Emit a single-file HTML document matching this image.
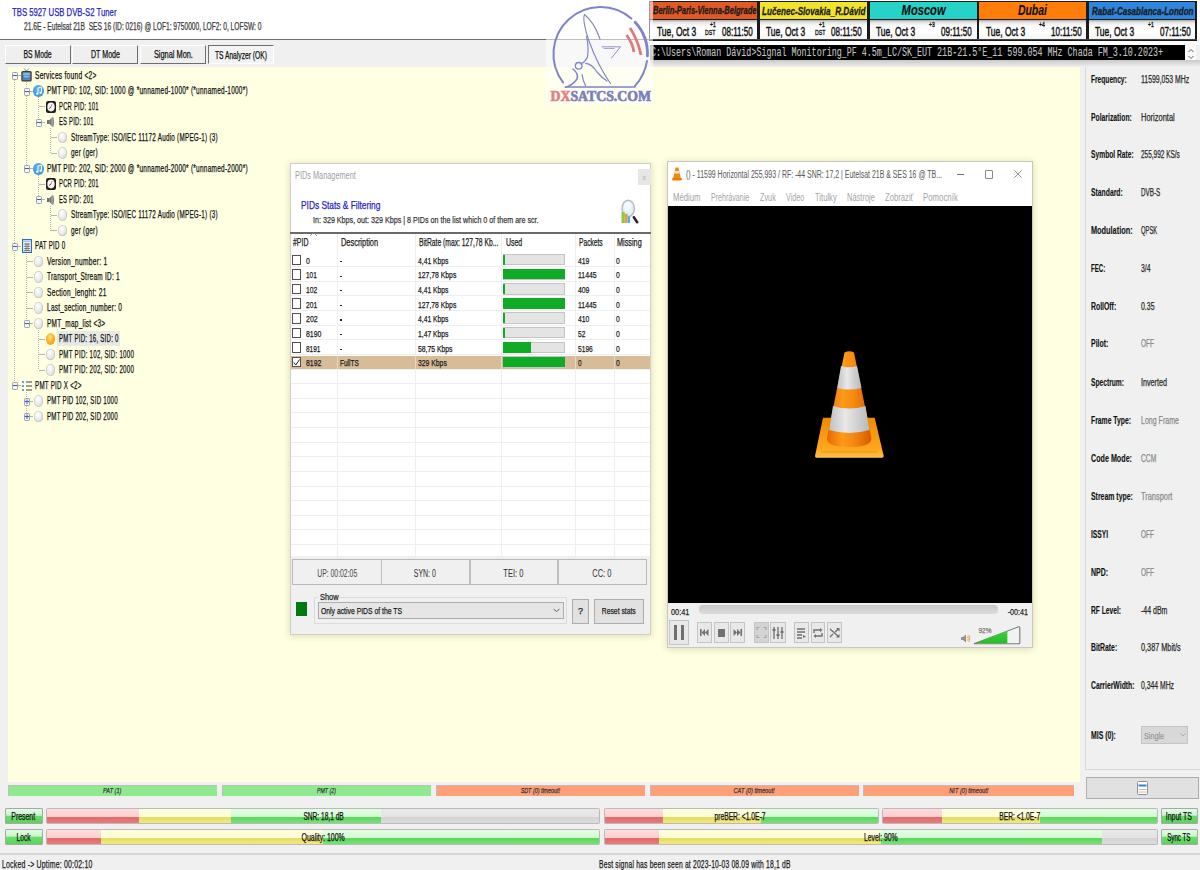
<!DOCTYPE html>
<html><head><meta charset="utf-8"><style>
html,body{margin:0;padding:0;}
body{width:1200px;height:870px;position:relative;overflow:hidden;background:#f0f0f0;font-family:'Liberation Sans', sans-serif;}
</style></head><body>
<div style="position:absolute;left:0px;top:0px;width:1200px;height:39px;background:#fff"></div>
<div style="position:absolute;left:0px;top:38.5px;width:650px;height:1.2px;background:#6e6e6e"></div>
<div style="position:absolute;left:12.25px;top:6.89px;white-space:pre;font:400 10.5px/10.5px 'Liberation Sans', sans-serif;color:#2525c8;-webkit-text-stroke:0.25px #2525c8;transform:scaleX(0.7368);transform-origin:0 0;">TBS 5927 USB DVB-S2 Tuner</div>
<div style="position:absolute;left:24.00px;top:21.53px;white-space:pre;font:400 10px/10px 'Liberation Sans', sans-serif;color:#3c3c3c;-webkit-text-stroke:0.25px #3c3c3c;transform:scaleX(0.6646);transform-origin:0 0;">21.6E - Eutelsat 21B  SES 16 (ID: 0216) @ LOF1: 9750000, LOF2: 0, LOFSW: 0</div>
<div style="position:absolute;left:0px;top:40px;width:1200px;height:27px;background:#f0f0f0"></div>
<div style="position:absolute;left:4.5px;top:45px;width:66px;height:19px;background:#efefef;border-top:1px solid #fff;border-left:1px solid #fff;border-right:1.7px solid #6e6e6e;border-bottom:1.7px solid #6e6e6e;box-sizing:border-box"></div>
<div style="position:absolute;left:72px;top:45px;width:66px;height:19px;background:#efefef;border-top:1px solid #fff;border-left:1px solid #fff;border-right:1.7px solid #6e6e6e;border-bottom:1.7px solid #6e6e6e;box-sizing:border-box"></div>
<div style="position:absolute;left:140px;top:45px;width:66px;height:19px;background:#efefef;border-top:1px solid #fff;border-left:1px solid #fff;border-right:1.7px solid #6e6e6e;border-bottom:1.7px solid #6e6e6e;box-sizing:border-box"></div>
<div style="position:absolute;left:208px;top:45px;width:66px;height:19px;background:#f3f3f3;border-top:1.6px solid #707070;border-left:1.6px solid #707070;border-right:1px solid #fff;border-bottom:1px solid #fff;box-sizing:border-box"></div>
<div style="position:absolute;left:37.50px;width:0;display:flex;justify-content:center;top:49.73px;height:10px;"><span style="white-space:pre;font:400 10px/10px 'Liberation Sans', sans-serif;color:#101010;-webkit-text-stroke:0.25px #101010;transform:scaleX(0.6806);transform-origin:50% 0;display:inline-block;">BS Mode</span></div>
<div style="position:absolute;left:105.00px;width:0;display:flex;justify-content:center;top:49.73px;height:10px;"><span style="white-space:pre;font:400 10px/10px 'Liberation Sans', sans-serif;color:#101010;-webkit-text-stroke:0.25px #101010;transform:scaleX(0.7081);transform-origin:50% 0;display:inline-block;">DT Mode</span></div>
<div style="position:absolute;left:173.00px;width:0;display:flex;justify-content:center;top:49.73px;height:10px;"><span style="white-space:pre;font:400 10px/10px 'Liberation Sans', sans-serif;color:#101010;-webkit-text-stroke:0.25px #101010;transform:scaleX(0.7385);transform-origin:50% 0;display:inline-block;">Signal Mon.</span></div>
<div style="position:absolute;left:241.00px;width:0;display:flex;justify-content:center;top:51.13px;height:10px;"><span style="white-space:pre;font:400 10px/10px 'Liberation Sans', sans-serif;color:#101010;-webkit-text-stroke:0.25px #101010;transform:scaleX(0.6683);transform-origin:50% 0;display:inline-block;">TS Analyzer (OK)</span></div>
<div style="position:absolute;left:7.5px;top:67px;width:1072px;height:715px;background:#ffffe1"></div>
<div style="position:absolute;left:26.0px;top:81.5px;width:1px;height:87.0px;background:repeating-linear-gradient(to bottom,#b4b4b4 0 1px,transparent 1px 2px)"></div>
<div style="position:absolute;left:14.7px;top:75.0px;width:6.800000000000001px;height:1px;background:#b8b8a8"></div>
<div style="position:absolute;left:38.0px;top:97.0px;width:1px;height:25.0px;background:repeating-linear-gradient(to bottom,#b4b4b4 0 1px,transparent 1px 2px)"></div>
<div style="position:absolute;left:26.7px;top:90.5px;width:6.800000000000001px;height:1px;background:#b8b8a8"></div>
<div style="position:absolute;left:38.7px;top:106.0px;width:6.799999999999997px;height:1px;background:#b8b8a8"></div>
<div style="position:absolute;left:50.0px;top:128.0px;width:1px;height:25.0px;background:repeating-linear-gradient(to bottom,#b4b4b4 0 1px,transparent 1px 2px)"></div>
<div style="position:absolute;left:38.7px;top:121.5px;width:6.799999999999997px;height:1px;background:#b8b8a8"></div>
<div style="position:absolute;left:50.7px;top:137.0px;width:6.799999999999997px;height:1px;background:#b8b8a8"></div>
<div style="position:absolute;left:50.7px;top:152.5px;width:6.799999999999997px;height:1px;background:#b8b8a8"></div>
<div style="position:absolute;left:38.0px;top:174.5px;width:1px;height:25.0px;background:repeating-linear-gradient(to bottom,#b4b4b4 0 1px,transparent 1px 2px)"></div>
<div style="position:absolute;left:26.7px;top:168.0px;width:6.800000000000001px;height:1px;background:#b8b8a8"></div>
<div style="position:absolute;left:38.7px;top:183.5px;width:6.799999999999997px;height:1px;background:#b8b8a8"></div>
<div style="position:absolute;left:50.0px;top:205.5px;width:1px;height:25.0px;background:repeating-linear-gradient(to bottom,#b4b4b4 0 1px,transparent 1px 2px)"></div>
<div style="position:absolute;left:38.7px;top:199.0px;width:6.799999999999997px;height:1px;background:#b8b8a8"></div>
<div style="position:absolute;left:50.7px;top:214.5px;width:6.799999999999997px;height:1px;background:#b8b8a8"></div>
<div style="position:absolute;left:50.7px;top:230.0px;width:6.799999999999997px;height:1px;background:#b8b8a8"></div>
<div style="position:absolute;left:26.0px;top:252.0px;width:1px;height:71.5px;background:repeating-linear-gradient(to bottom,#b4b4b4 0 1px,transparent 1px 2px)"></div>
<div style="position:absolute;left:14.7px;top:245.5px;width:6.800000000000001px;height:1px;background:#b8b8a8"></div>
<div style="position:absolute;left:26.7px;top:261.0px;width:6.800000000000001px;height:1px;background:#b8b8a8"></div>
<div style="position:absolute;left:26.7px;top:276.5px;width:6.800000000000001px;height:1px;background:#b8b8a8"></div>
<div style="position:absolute;left:26.7px;top:292.0px;width:6.800000000000001px;height:1px;background:#b8b8a8"></div>
<div style="position:absolute;left:26.7px;top:307.5px;width:6.800000000000001px;height:1px;background:#b8b8a8"></div>
<div style="position:absolute;left:38.0px;top:329.5px;width:1px;height:40.5px;background:repeating-linear-gradient(to bottom,#b4b4b4 0 1px,transparent 1px 2px)"></div>
<div style="position:absolute;left:26.7px;top:323.0px;width:6.800000000000001px;height:1px;background:#b8b8a8"></div>
<div style="position:absolute;left:38.7px;top:338.5px;width:6.799999999999997px;height:1px;background:#b8b8a8"></div>
<div style="position:absolute;left:38.7px;top:354.0px;width:6.799999999999997px;height:1px;background:#b8b8a8"></div>
<div style="position:absolute;left:38.7px;top:369.5px;width:6.799999999999997px;height:1px;background:#b8b8a8"></div>
<div style="position:absolute;left:26.0px;top:391.5px;width:1px;height:25.0px;background:repeating-linear-gradient(to bottom,#b4b4b4 0 1px,transparent 1px 2px)"></div>
<div style="position:absolute;left:14.7px;top:385.0px;width:6.800000000000001px;height:1px;background:#b8b8a8"></div>
<div style="position:absolute;left:26.7px;top:400.5px;width:6.800000000000001px;height:1px;background:#b8b8a8"></div>
<div style="position:absolute;left:26.7px;top:416.0px;width:6.800000000000001px;height:1px;background:#b8b8a8"></div>
<div style="position:absolute;left:14.2px;top:79.5px;width:1px;height:306.0px;background:repeating-linear-gradient(to bottom,#b4b4b4 0 1px,transparent 1px 2px)"></div>
<svg style="position:absolute;left:12px;top:72px" width="6" height="8" viewBox="0 0 6 8"><rect x="0.5" y="0.5" width="5" height="7" rx="0.8" fill="#f4f4f4" stroke="#a0a0a0" stroke-width="1"/><path d="M1 3.5 H5" stroke="#3a5cc8" stroke-width="1"/></svg>
<svg style="position:absolute;left:21.0px;top:68.0px" width="11" height="14" viewBox="0 0 11 14"><path d="M3 0.5 L5.5 3 L8 0.5" stroke="#606060" stroke-width="0.8" fill="none"/><rect x="0.3" y="3" width="10.4" height="10.5" rx="1.5" fill="#3c3c3c"/><rect x="1.5" y="4.2" width="8" height="8" rx="0.8" fill="#7a8088"/><rect x="2.2" y="4.8" width="6.6" height="6.6" rx="0.5" fill="#3a8ad8"/><rect x="2.2" y="4.8" width="6.6" height="2.6" fill="#7ab8f0"/><rect x="3" y="8.3" width="5" height="1" fill="#a8d0f8"/></svg>
<div style="position:absolute;left:34.60px;top:70.64px;white-space:pre;font:400 10px/10px 'Liberation Sans', sans-serif;color:#101010;-webkit-text-stroke:0.25px #101010;transform:scaleX(0.6602);transform-origin:0 0;letter-spacing:0.4px">Services found &lt;2&gt;</div>
<svg style="position:absolute;left:24px;top:88px" width="6" height="8" viewBox="0 0 6 8"><rect x="0.5" y="0.5" width="5" height="7" rx="0.8" fill="#f4f4f4" stroke="#a0a0a0" stroke-width="1"/><path d="M1 3.5 H5" stroke="#3a5cc8" stroke-width="1"/></svg>
<div style="position:absolute;left:33.3px;top:85.0px;width:10.5px;height:12px;border-radius:50%;background:radial-gradient(ellipse at 50% 40%,#70c0f8 0%,#3a98e0 70%,#2a80d0 100%)"></div>
<svg style="position:absolute;left:33.5px;top:85.0px" width="10" height="12" viewBox="0 0 10 12"><path d="M4 8.5 V3 L7.5 2 V7.5" stroke="#fff" stroke-width="0.9" fill="none"/><ellipse cx="3.2" cy="8.7" rx="1.2" ry="1" fill="#fff"/><ellipse cx="6.7" cy="7.8" rx="1.2" ry="1" fill="#fff"/></svg>
<div style="position:absolute;left:46.60px;top:86.14px;white-space:pre;font:400 10px/10px 'Liberation Sans', sans-serif;color:#101010;-webkit-text-stroke:0.25px #101010;transform:scaleX(0.6466);transform-origin:0 0;letter-spacing:0.4px">PMT PID: 102, SID: 1000 @ *unnamed-1000* (*unnamed-1000*)</div>
<svg style="position:absolute;left:45.5px;top:100.5px" width="10" height="12" viewBox="0 0 10 12"><rect x="0" y="0" width="10" height="12" rx="2.2" fill="#1e1e1e"/><ellipse cx="5" cy="6" rx="3.7" ry="4.4" fill="#f6f6f6"/><path d="M5 6 L3 7.6" stroke="#303030" stroke-width="0.8"/><path d="M5 6 L6 3" stroke="#d03030" stroke-width="0.6"/></svg>
<div style="position:absolute;left:58.60px;top:101.64px;white-space:pre;font:400 10px/10px 'Liberation Sans', sans-serif;color:#101010;-webkit-text-stroke:0.25px #101010;transform:scaleX(0.5865);transform-origin:0 0;letter-spacing:0.4px">PCR PID: 101</div>
<svg style="position:absolute;left:36px;top:119px" width="6" height="8" viewBox="0 0 6 8"><rect x="0.5" y="0.5" width="5" height="7" rx="0.8" fill="#f4f4f4" stroke="#a0a0a0" stroke-width="1"/><path d="M1 3.5 H5" stroke="#3a5cc8" stroke-width="1"/></svg>
<svg style="position:absolute;left:45.5px;top:115.0px" width="10" height="14" viewBox="0 0 10 14"><defs><linearGradient id="sg" x1="0" x2="1"><stop offset="0" stop-color="#5a5a5a"/><stop offset="0.6" stop-color="#a8a8a8"/><stop offset="1" stop-color="#6a6a6a"/></linearGradient></defs><rect x="1" y="5" width="2.5" height="4" fill="#707070"/><path d="M3.5 5 L7 1.5 Q9 7 7 12.5 L3.5 9 Z" fill="url(#sg)"/></svg>
<div style="position:absolute;left:58.60px;top:117.14px;white-space:pre;font:400 10px/10px 'Liberation Sans', sans-serif;color:#101010;-webkit-text-stroke:0.25px #101010;transform:scaleX(0.5830);transform-origin:0 0;letter-spacing:0.4px">ES PID: 101</div>
<div style="position:absolute;left:58.0px;top:131.5px;width:9px;height:11.5px;border-radius:50%;background:radial-gradient(ellipse at 40% 30%,#ffffff 0%,#ececec 45%,#cfcfcf 85%,#b8b8b8 100%);box-shadow:inset 0 0 0 0.5px #c0c0c0"></div>
<div style="position:absolute;left:70.60px;top:132.63px;white-space:pre;font:400 10px/10px 'Liberation Sans', sans-serif;color:#101010;-webkit-text-stroke:0.25px #101010;transform:scaleX(0.6293);transform-origin:0 0;letter-spacing:0.4px">StreamType: ISO/IEC 11172 Audio (MPEG-1) (3)</div>
<div style="position:absolute;left:58.0px;top:147.0px;width:9px;height:11.5px;border-radius:50%;background:radial-gradient(ellipse at 40% 30%,#ffffff 0%,#ececec 45%,#cfcfcf 85%,#b8b8b8 100%);box-shadow:inset 0 0 0 0.5px #c0c0c0"></div>
<div style="position:absolute;left:70.60px;top:148.13px;white-space:pre;font:400 10px/10px 'Liberation Sans', sans-serif;color:#101010;-webkit-text-stroke:0.25px #101010;transform:scaleX(0.6412);transform-origin:0 0;letter-spacing:0.4px">ger (ger)</div>
<svg style="position:absolute;left:24px;top:165px" width="6" height="8" viewBox="0 0 6 8"><rect x="0.5" y="0.5" width="5" height="7" rx="0.8" fill="#f4f4f4" stroke="#a0a0a0" stroke-width="1"/><path d="M1 3.5 H5" stroke="#3a5cc8" stroke-width="1"/></svg>
<div style="position:absolute;left:33.3px;top:162.5px;width:10.5px;height:12px;border-radius:50%;background:radial-gradient(ellipse at 50% 40%,#70c0f8 0%,#3a98e0 70%,#2a80d0 100%)"></div>
<svg style="position:absolute;left:33.5px;top:162.5px" width="10" height="12" viewBox="0 0 10 12"><path d="M4 8.5 V3 L7.5 2 V7.5" stroke="#fff" stroke-width="0.9" fill="none"/><ellipse cx="3.2" cy="8.7" rx="1.2" ry="1" fill="#fff"/><ellipse cx="6.7" cy="7.8" rx="1.2" ry="1" fill="#fff"/></svg>
<div style="position:absolute;left:46.60px;top:163.63px;white-space:pre;font:400 10px/10px 'Liberation Sans', sans-serif;color:#101010;-webkit-text-stroke:0.25px #101010;transform:scaleX(0.6466);transform-origin:0 0;letter-spacing:0.4px">PMT PID: 202, SID: 2000 @ *unnamed-2000* (*unnamed-2000*)</div>
<svg style="position:absolute;left:45.5px;top:178.0px" width="10" height="12" viewBox="0 0 10 12"><rect x="0" y="0" width="10" height="12" rx="2.2" fill="#1e1e1e"/><ellipse cx="5" cy="6" rx="3.7" ry="4.4" fill="#f6f6f6"/><path d="M5 6 L3 7.6" stroke="#303030" stroke-width="0.8"/><path d="M5 6 L6 3" stroke="#d03030" stroke-width="0.6"/></svg>
<div style="position:absolute;left:58.60px;top:179.13px;white-space:pre;font:400 10px/10px 'Liberation Sans', sans-serif;color:#101010;-webkit-text-stroke:0.25px #101010;transform:scaleX(0.5865);transform-origin:0 0;letter-spacing:0.4px">PCR PID: 201</div>
<svg style="position:absolute;left:36px;top:196px" width="6" height="8" viewBox="0 0 6 8"><rect x="0.5" y="0.5" width="5" height="7" rx="0.8" fill="#f4f4f4" stroke="#a0a0a0" stroke-width="1"/><path d="M1 3.5 H5" stroke="#3a5cc8" stroke-width="1"/></svg>
<svg style="position:absolute;left:45.5px;top:192.5px" width="10" height="14" viewBox="0 0 10 14"><defs><linearGradient id="sg" x1="0" x2="1"><stop offset="0" stop-color="#5a5a5a"/><stop offset="0.6" stop-color="#a8a8a8"/><stop offset="1" stop-color="#6a6a6a"/></linearGradient></defs><rect x="1" y="5" width="2.5" height="4" fill="#707070"/><path d="M3.5 5 L7 1.5 Q9 7 7 12.5 L3.5 9 Z" fill="url(#sg)"/></svg>
<div style="position:absolute;left:58.60px;top:194.63px;white-space:pre;font:400 10px/10px 'Liberation Sans', sans-serif;color:#101010;-webkit-text-stroke:0.25px #101010;transform:scaleX(0.5830);transform-origin:0 0;letter-spacing:0.4px">ES PID: 201</div>
<div style="position:absolute;left:58.0px;top:209.0px;width:9px;height:11.5px;border-radius:50%;background:radial-gradient(ellipse at 40% 30%,#ffffff 0%,#ececec 45%,#cfcfcf 85%,#b8b8b8 100%);box-shadow:inset 0 0 0 0.5px #c0c0c0"></div>
<div style="position:absolute;left:70.60px;top:210.13px;white-space:pre;font:400 10px/10px 'Liberation Sans', sans-serif;color:#101010;-webkit-text-stroke:0.25px #101010;transform:scaleX(0.6293);transform-origin:0 0;letter-spacing:0.4px">StreamType: ISO/IEC 11172 Audio (MPEG-1) (3)</div>
<div style="position:absolute;left:58.0px;top:224.5px;width:9px;height:11.5px;border-radius:50%;background:radial-gradient(ellipse at 40% 30%,#ffffff 0%,#ececec 45%,#cfcfcf 85%,#b8b8b8 100%);box-shadow:inset 0 0 0 0.5px #c0c0c0"></div>
<div style="position:absolute;left:70.60px;top:225.63px;white-space:pre;font:400 10px/10px 'Liberation Sans', sans-serif;color:#101010;-webkit-text-stroke:0.25px #101010;transform:scaleX(0.6412);transform-origin:0 0;letter-spacing:0.4px">ger (ger)</div>
<svg style="position:absolute;left:12px;top:243px" width="6" height="8" viewBox="0 0 6 8"><rect x="0.5" y="0.5" width="5" height="7" rx="0.8" fill="#f4f4f4" stroke="#a0a0a0" stroke-width="1"/><path d="M1 3.5 H5" stroke="#3a5cc8" stroke-width="1"/></svg>
<svg style="position:absolute;left:21.5px;top:239.0px" width="10" height="14" viewBox="0 0 10 14"><rect x="0.6" y="0.6" width="8.8" height="12.8" fill="#fff" stroke="#2a70c0" stroke-width="1.2"/><rect x="1.5" y="1.5" width="7" height="1.8" fill="#a8c8f0"/><path d="M2 5 H8 M2 7.3 H8 M2 9.6 H8 M2 11.6 H8 M4 4 V12 M6 4 V12" stroke="#606060" stroke-width="0.8"/></svg>
<div style="position:absolute;left:34.60px;top:241.13px;white-space:pre;font:400 10px/10px 'Liberation Sans', sans-serif;color:#101010;-webkit-text-stroke:0.25px #101010;transform:scaleX(0.6182);transform-origin:0 0;letter-spacing:0.4px">PAT PID 0</div>
<div style="position:absolute;left:34.0px;top:255.5px;width:9px;height:11.5px;border-radius:50%;background:radial-gradient(ellipse at 40% 30%,#ffffff 0%,#ececec 45%,#cfcfcf 85%,#b8b8b8 100%);box-shadow:inset 0 0 0 0.5px #c0c0c0"></div>
<div style="position:absolute;left:46.60px;top:256.63px;white-space:pre;font:400 10px/10px 'Liberation Sans', sans-serif;color:#101010;-webkit-text-stroke:0.25px #101010;transform:scaleX(0.6656);transform-origin:0 0;letter-spacing:0.4px">Version_number: 1</div>
<div style="position:absolute;left:34.0px;top:271.0px;width:9px;height:11.5px;border-radius:50%;background:radial-gradient(ellipse at 40% 30%,#ffffff 0%,#ececec 45%,#cfcfcf 85%,#b8b8b8 100%);box-shadow:inset 0 0 0 0.5px #c0c0c0"></div>
<div style="position:absolute;left:46.60px;top:272.13px;white-space:pre;font:400 10px/10px 'Liberation Sans', sans-serif;color:#101010;-webkit-text-stroke:0.25px #101010;transform:scaleX(0.6456);transform-origin:0 0;letter-spacing:0.4px">Transport_Stream ID: 1</div>
<div style="position:absolute;left:34.0px;top:286.5px;width:9px;height:11.5px;border-radius:50%;background:radial-gradient(ellipse at 40% 30%,#ffffff 0%,#ececec 45%,#cfcfcf 85%,#b8b8b8 100%);box-shadow:inset 0 0 0 0.5px #c0c0c0"></div>
<div style="position:absolute;left:46.60px;top:287.63px;white-space:pre;font:400 10px/10px 'Liberation Sans', sans-serif;color:#101010;-webkit-text-stroke:0.25px #101010;transform:scaleX(0.6624);transform-origin:0 0;letter-spacing:0.4px">Section_lenght: 21</div>
<div style="position:absolute;left:34.0px;top:302.0px;width:9px;height:11.5px;border-radius:50%;background:radial-gradient(ellipse at 40% 30%,#ffffff 0%,#ececec 45%,#cfcfcf 85%,#b8b8b8 100%);box-shadow:inset 0 0 0 0.5px #c0c0c0"></div>
<div style="position:absolute;left:46.60px;top:303.13px;white-space:pre;font:400 10px/10px 'Liberation Sans', sans-serif;color:#101010;-webkit-text-stroke:0.25px #101010;transform:scaleX(0.6504);transform-origin:0 0;letter-spacing:0.4px">Last_section_number: 0</div>
<svg style="position:absolute;left:24px;top:320px" width="6" height="8" viewBox="0 0 6 8"><rect x="0.5" y="0.5" width="5" height="7" rx="0.8" fill="#f4f4f4" stroke="#a0a0a0" stroke-width="1"/><path d="M1 3.5 H5" stroke="#3a5cc8" stroke-width="1"/></svg>
<div style="position:absolute;left:34.0px;top:317.5px;width:9px;height:11.5px;border-radius:50%;background:radial-gradient(ellipse at 40% 30%,#ffffff 0%,#ececec 45%,#cfcfcf 85%,#b8b8b8 100%);box-shadow:inset 0 0 0 0.5px #c0c0c0"></div>
<div style="position:absolute;left:46.60px;top:318.63px;white-space:pre;font:400 10px/10px 'Liberation Sans', sans-serif;color:#101010;-webkit-text-stroke:0.25px #101010;transform:scaleX(0.6465);transform-origin:0 0;letter-spacing:0.4px">PMT_map_list &lt;3&gt;</div>
<div style="position:absolute;left:57px;top:331px;width:62.5px;height:15px;background:#e8e8e8"></div>
<div style="position:absolute;left:46.0px;top:333.0px;width:9px;height:11.5px;border-radius:50%;background:radial-gradient(ellipse at 45% 35%,#ffe080 0%,#f8a818 60%,#e88a00 100%)"></div>
<div style="position:absolute;left:58.60px;top:334.13px;white-space:pre;font:400 10px/10px 'Liberation Sans', sans-serif;color:#101010;-webkit-text-stroke:0.25px #101010;transform:scaleX(0.6086);transform-origin:0 0;letter-spacing:0.4px">PMT PID: 16, SID: 0</div>
<div style="position:absolute;left:46.0px;top:348.5px;width:9px;height:11.5px;border-radius:50%;background:radial-gradient(ellipse at 40% 30%,#ffffff 0%,#ececec 45%,#cfcfcf 85%,#b8b8b8 100%);box-shadow:inset 0 0 0 0.5px #c0c0c0"></div>
<div style="position:absolute;left:58.60px;top:349.63px;white-space:pre;font:400 10px/10px 'Liberation Sans', sans-serif;color:#101010;-webkit-text-stroke:0.25px #101010;transform:scaleX(0.6167);transform-origin:0 0;letter-spacing:0.4px">PMT PID: 102, SID: 1000</div>
<div style="position:absolute;left:46.0px;top:364.0px;width:9px;height:11.5px;border-radius:50%;background:radial-gradient(ellipse at 40% 30%,#ffffff 0%,#ececec 45%,#cfcfcf 85%,#b8b8b8 100%);box-shadow:inset 0 0 0 0.5px #c0c0c0"></div>
<div style="position:absolute;left:58.60px;top:365.13px;white-space:pre;font:400 10px/10px 'Liberation Sans', sans-serif;color:#101010;-webkit-text-stroke:0.25px #101010;transform:scaleX(0.6167);transform-origin:0 0;letter-spacing:0.4px">PMT PID: 202, SID: 2000</div>
<svg style="position:absolute;left:12px;top:382px" width="6" height="8" viewBox="0 0 6 8"><rect x="0.5" y="0.5" width="5" height="7" rx="0.8" fill="#f4f4f4" stroke="#a0a0a0" stroke-width="1"/><path d="M1 3.5 H5" stroke="#3a5cc8" stroke-width="1"/></svg>
<svg style="position:absolute;left:21.5px;top:379.5px" width="11" height="12" viewBox="0 0 11 12"><rect x="0" y="1" width="2" height="2" fill="#60a0e8"/><rect x="0" y="5" width="2" height="2" fill="#60a0e8"/><rect x="0" y="9" width="2" height="2" fill="#60a0e8"/><path d="M4 2 H10 M4 6 H10 M4 10 H10" stroke="#404040" stroke-width="1"/></svg>
<div style="position:absolute;left:34.60px;top:380.63px;white-space:pre;font:400 10px/10px 'Liberation Sans', sans-serif;color:#101010;-webkit-text-stroke:0.25px #101010;transform:scaleX(0.6216);transform-origin:0 0;letter-spacing:0.4px">PMT PID X &lt;2&gt;</div>
<svg style="position:absolute;left:24px;top:398px" width="6" height="8" viewBox="0 0 6 8"><rect x="0.5" y="0.5" width="5" height="7" rx="0.8" fill="#f4f4f4" stroke="#a0a0a0" stroke-width="1"/><path d="M1 3.5 H5" stroke="#3a5cc8" stroke-width="1"/><path d="M3 1.5 V6" stroke="#3a5cc8" stroke-width="1"/></svg>
<div style="position:absolute;left:34.0px;top:395.0px;width:9px;height:11.5px;border-radius:50%;background:radial-gradient(ellipse at 40% 30%,#ffffff 0%,#ececec 45%,#cfcfcf 85%,#b8b8b8 100%);box-shadow:inset 0 0 0 0.5px #c0c0c0"></div>
<div style="position:absolute;left:46.60px;top:396.13px;white-space:pre;font:400 10px/10px 'Liberation Sans', sans-serif;color:#101010;-webkit-text-stroke:0.25px #101010;transform:scaleX(0.6139);transform-origin:0 0;letter-spacing:0.4px">PMT PID 102, SID 1000</div>
<svg style="position:absolute;left:24px;top:413px" width="6" height="8" viewBox="0 0 6 8"><rect x="0.5" y="0.5" width="5" height="7" rx="0.8" fill="#f4f4f4" stroke="#a0a0a0" stroke-width="1"/><path d="M1 3.5 H5" stroke="#3a5cc8" stroke-width="1"/><path d="M3 1.5 V6" stroke="#3a5cc8" stroke-width="1"/></svg>
<div style="position:absolute;left:34.0px;top:410.5px;width:9px;height:11.5px;border-radius:50%;background:radial-gradient(ellipse at 40% 30%,#ffffff 0%,#ececec 45%,#cfcfcf 85%,#b8b8b8 100%);box-shadow:inset 0 0 0 0.5px #c0c0c0"></div>
<div style="position:absolute;left:46.60px;top:411.63px;white-space:pre;font:400 10px/10px 'Liberation Sans', sans-serif;color:#101010;-webkit-text-stroke:0.25px #101010;transform:scaleX(0.6139);transform-origin:0 0;letter-spacing:0.4px">PMT PID 202, SID 2000</div>
<div style="position:absolute;left:1085px;top:61px;width:115px;height:709px;background:#f0f0f0;border-left:1px solid #d8d8d8;border-bottom:1px solid #d8d8d8;box-sizing:border-box"></div>
<div style="position:absolute;left:1091.00px;top:74.64px;white-space:pre;font:700 10px/10px 'Liberation Sans', sans-serif;color:#101010;-webkit-text-stroke:0.12px #101010;transform:scaleX(0.6623);transform-origin:0 0;">Frequency:</div>
<div style="position:absolute;left:1141.00px;top:74.64px;white-space:pre;font:400 10px/10px 'Liberation Sans', sans-serif;color:#2a2a2a;-webkit-text-stroke:0.25px #2a2a2a;transform:scaleX(0.6900);transform-origin:0 0;">11599,053 MHz</div>
<div style="position:absolute;left:1091.00px;top:112.54px;white-space:pre;font:700 10px/10px 'Liberation Sans', sans-serif;color:#101010;-webkit-text-stroke:0.12px #101010;transform:scaleX(0.6798);transform-origin:0 0;">Polarization:</div>
<div style="position:absolute;left:1141.00px;top:112.54px;white-space:pre;font:400 10px/10px 'Liberation Sans', sans-serif;color:#2a2a2a;-webkit-text-stroke:0.25px #2a2a2a;transform:scaleX(0.7506);transform-origin:0 0;">Horizontal</div>
<div style="position:absolute;left:1091.00px;top:150.13px;white-space:pre;font:700 10px/10px 'Liberation Sans', sans-serif;color:#101010;-webkit-text-stroke:0.12px #101010;transform:scaleX(0.6689);transform-origin:0 0;">Symbol Rate:</div>
<div style="position:absolute;left:1141.00px;top:150.13px;white-space:pre;font:400 10px/10px 'Liberation Sans', sans-serif;color:#2a2a2a;-webkit-text-stroke:0.25px #2a2a2a;transform:scaleX(0.6462);transform-origin:0 0;">255,992 KS/s</div>
<div style="position:absolute;left:1091.00px;top:187.94px;white-space:pre;font:700 10px/10px 'Liberation Sans', sans-serif;color:#101010;-webkit-text-stroke:0.12px #101010;transform:scaleX(0.6814);transform-origin:0 0;">Standard:</div>
<div style="position:absolute;left:1141.00px;top:187.94px;white-space:pre;font:400 10px/10px 'Liberation Sans', sans-serif;color:#2a2a2a;-webkit-text-stroke:0.25px #2a2a2a;transform:scaleX(0.6315);transform-origin:0 0;">DVB-S</div>
<div style="position:absolute;left:1091.00px;top:225.83px;white-space:pre;font:700 10px/10px 'Liberation Sans', sans-serif;color:#101010;-webkit-text-stroke:0.12px #101010;transform:scaleX(0.7343);transform-origin:0 0;">Modulation:</div>
<div style="position:absolute;left:1141.00px;top:225.83px;white-space:pre;font:400 10px/10px 'Liberation Sans', sans-serif;color:#2a2a2a;-webkit-text-stroke:0.25px #2a2a2a;transform:scaleX(0.5828);transform-origin:0 0;">QPSK</div>
<div style="position:absolute;left:1091.00px;top:263.74px;white-space:pre;font:700 10px/10px 'Liberation Sans', sans-serif;color:#101010;-webkit-text-stroke:0.12px #101010;transform:scaleX(0.6083);transform-origin:0 0;">FEC:</div>
<div style="position:absolute;left:1141.00px;top:263.74px;white-space:pre;font:400 10px/10px 'Liberation Sans', sans-serif;color:#2a2a2a;-webkit-text-stroke:0.25px #2a2a2a;transform:scaleX(0.6831);transform-origin:0 0;">3/4</div>
<div style="position:absolute;left:1091.00px;top:301.53px;white-space:pre;font:700 10px/10px 'Liberation Sans', sans-serif;color:#101010;-webkit-text-stroke:0.12px #101010;transform:scaleX(0.6875);transform-origin:0 0;">RollOff:</div>
<div style="position:absolute;left:1141.00px;top:301.53px;white-space:pre;font:400 10px/10px 'Liberation Sans', sans-serif;color:#2a2a2a;-webkit-text-stroke:0.25px #2a2a2a;transform:scaleX(0.6934);transform-origin:0 0;">0.35</div>
<div style="position:absolute;left:1091.00px;top:339.33px;white-space:pre;font:700 10px/10px 'Liberation Sans', sans-serif;color:#101010;-webkit-text-stroke:0.12px #101010;transform:scaleX(0.6960);transform-origin:0 0;">Pilot:</div>
<div style="position:absolute;left:1141.00px;top:339.33px;white-space:pre;font:400 10px/10px 'Liberation Sans', sans-serif;color:#8a8a8a;-webkit-text-stroke:0.25px #8a8a8a;transform:scaleX(0.6500);transform-origin:0 0;">OFF</div>
<div style="position:absolute;left:1091.00px;top:377.53px;white-space:pre;font:700 10px/10px 'Liberation Sans', sans-serif;color:#101010;-webkit-text-stroke:0.12px #101010;transform:scaleX(0.6673);transform-origin:0 0;">Spectrum:</div>
<div style="position:absolute;left:1141.00px;top:377.53px;white-space:pre;font:400 10px/10px 'Liberation Sans', sans-serif;color:#2a2a2a;-webkit-text-stroke:0.25px #2a2a2a;transform:scaleX(0.7194);transform-origin:0 0;">Inverted</div>
<div style="position:absolute;left:1091.00px;top:415.83px;white-space:pre;font:700 10px/10px 'Liberation Sans', sans-serif;color:#101010;-webkit-text-stroke:0.12px #101010;transform:scaleX(0.6810);transform-origin:0 0;">Frame Type:</div>
<div style="position:absolute;left:1141.00px;top:415.83px;white-space:pre;font:400 10px/10px 'Liberation Sans', sans-serif;color:#8a8a8a;-webkit-text-stroke:0.25px #8a8a8a;transform:scaleX(0.7029);transform-origin:0 0;">Long Frame</div>
<div style="position:absolute;left:1091.00px;top:454.03px;white-space:pre;font:700 10px/10px 'Liberation Sans', sans-serif;color:#101010;-webkit-text-stroke:0.12px #101010;transform:scaleX(0.7165);transform-origin:0 0;">Code Mode:</div>
<div style="position:absolute;left:1141.00px;top:454.03px;white-space:pre;font:400 10px/10px 'Liberation Sans', sans-serif;color:#8a8a8a;-webkit-text-stroke:0.25px #8a8a8a;transform:scaleX(0.6716);transform-origin:0 0;">CCM</div>
<div style="position:absolute;left:1091.00px;top:491.74px;white-space:pre;font:700 10px/10px 'Liberation Sans', sans-serif;color:#101010;-webkit-text-stroke:0.12px #101010;transform:scaleX(0.6917);transform-origin:0 0;">Stream type:</div>
<div style="position:absolute;left:1141.00px;top:491.74px;white-space:pre;font:400 10px/10px 'Liberation Sans', sans-serif;color:#8a8a8a;-webkit-text-stroke:0.25px #8a8a8a;transform:scaleX(0.7402);transform-origin:0 0;">Transport</div>
<div style="position:absolute;left:1091.00px;top:529.84px;white-space:pre;font:700 10px/10px 'Liberation Sans', sans-serif;color:#101010;-webkit-text-stroke:0.12px #101010;transform:scaleX(0.6646);transform-origin:0 0;">ISSYI</div>
<div style="position:absolute;left:1141.00px;top:529.84px;white-space:pre;font:400 10px/10px 'Liberation Sans', sans-serif;color:#8a8a8a;-webkit-text-stroke:0.25px #8a8a8a;transform:scaleX(0.6500);transform-origin:0 0;">OFF</div>
<div style="position:absolute;left:1091.00px;top:567.53px;white-space:pre;font:700 10px/10px 'Liberation Sans', sans-serif;color:#101010;-webkit-text-stroke:0.12px #101010;transform:scaleX(0.6952);transform-origin:0 0;">NPD:</div>
<div style="position:absolute;left:1141.00px;top:567.53px;white-space:pre;font:400 10px/10px 'Liberation Sans', sans-serif;color:#8a8a8a;-webkit-text-stroke:0.25px #8a8a8a;transform:scaleX(0.6500);transform-origin:0 0;">OFF</div>
<div style="position:absolute;left:1091.00px;top:605.74px;white-space:pre;font:700 10px/10px 'Liberation Sans', sans-serif;color:#101010;-webkit-text-stroke:0.12px #101010;transform:scaleX(0.6664);transform-origin:0 0;">RF Level:</div>
<div style="position:absolute;left:1141.00px;top:605.74px;white-space:pre;font:400 10px/10px 'Liberation Sans', sans-serif;color:#2a2a2a;-webkit-text-stroke:0.25px #2a2a2a;transform:scaleX(0.6985);transform-origin:0 0;">-44 dBm</div>
<div style="position:absolute;left:1091.00px;top:643.43px;white-space:pre;font:700 10px/10px 'Liberation Sans', sans-serif;color:#101010;-webkit-text-stroke:0.12px #101010;transform:scaleX(0.6833);transform-origin:0 0;">BitRate:</div>
<div style="position:absolute;left:1141.00px;top:643.43px;white-space:pre;font:400 10px/10px 'Liberation Sans', sans-serif;color:#2a2a2a;-webkit-text-stroke:0.25px #2a2a2a;transform:scaleX(0.7286);transform-origin:0 0;">0,387 Mbit/s</div>
<div style="position:absolute;left:1091.00px;top:681.34px;white-space:pre;font:700 10px/10px 'Liberation Sans', sans-serif;color:#101010;-webkit-text-stroke:0.12px #101010;transform:scaleX(0.6817);transform-origin:0 0;">CarrierWidth:</div>
<div style="position:absolute;left:1141.00px;top:681.34px;white-space:pre;font:400 10px/10px 'Liberation Sans', sans-serif;color:#2a2a2a;-webkit-text-stroke:0.25px #2a2a2a;transform:scaleX(0.6824);transform-origin:0 0;">0,344 MHz</div>
<div style="position:absolute;left:1091.00px;top:730.74px;white-space:pre;font:700 10px/10px 'Liberation Sans', sans-serif;color:#101010;-webkit-text-stroke:0.12px #101010;transform:scaleX(0.6896);transform-origin:0 0;">MIS (0):</div>
<div style="position:absolute;left:1141px;top:726px;width:47px;height:18px;background:#d8d8d8;border:1px solid #c4c4c4;box-sizing:border-box"></div>
<div style="position:absolute;left:1143.50px;top:730.88px;white-space:pre;font:400 9.5px/9.5px 'Liberation Sans', sans-serif;color:#9a9a9a;-webkit-text-stroke:0.25px #9a9a9a;transform:scaleX(0.7569);transform-origin:0 0;">Single</div>
<svg style="position:absolute;left:1180px;top:733px" width="6" height="4" viewBox="0 0 6 4"><path d="M0.5 0.5 L3 3 L5.5 0.5" stroke="#a0a0a0" stroke-width="0.8" fill="none"/></svg>
<div style="position:absolute;left:1086px;top:777px;width:113px;height:22px;background:#e1e1e1;border:1px solid #adadad;box-sizing:border-box"></div>
<svg style="position:absolute;left:1137px;top:781px" width="11" height="14" viewBox="0 0 11 14"><rect x="0.5" y="0.5" width="10" height="13" rx="1" fill="#fff" stroke="#909090"/><rect x="1.5" y="3.5" width="8" height="2" fill="#3a7ad8"/><path d="M1.5 8.5 H9.5 M1.5 11 H9.5" stroke="#b0b0b0" stroke-width="0.8"/></svg>
<div style="position:absolute;left:649px;top:1px;width:548px;height:40px;background:#1a1a1a"></div>
<div style="position:absolute;left:650.2px;top:2.2px;width:107.3px;height:16.5px;background:#e05a28"></div>
<div style="position:absolute;left:650.2px;top:19.8px;width:107.3px;height:19.2px;background:linear-gradient(#a8a8a8 0%,#e4e4e4 12%,#fafafa 30%,#ffffff 60%,#f4f4f4 100%)"></div>
<div style="position:absolute;left:759.7px;top:2.2px;width:107.59999999999995px;height:16.5px;background:#f2e42a"></div>
<div style="position:absolute;left:759.7px;top:19.8px;width:107.59999999999995px;height:19.2px;background:linear-gradient(#a8a8a8 0%,#e4e4e4 12%,#fafafa 30%,#ffffff 60%,#f4f4f4 100%)"></div>
<div style="position:absolute;left:869.5px;top:2.2px;width:107.50000000000004px;height:16.5px;background:#27d3c6"></div>
<div style="position:absolute;left:869.5px;top:19.8px;width:107.50000000000004px;height:19.2px;background:linear-gradient(#a8a8a8 0%,#e4e4e4 12%,#fafafa 30%,#ffffff 60%,#f4f4f4 100%)"></div>
<div style="position:absolute;left:979.2px;top:2.2px;width:107.20000000000009px;height:16.5px;background:#ff7d0a"></div>
<div style="position:absolute;left:979.2px;top:19.8px;width:107.20000000000009px;height:19.2px;background:linear-gradient(#a8a8a8 0%,#e4e4e4 12%,#fafafa 30%,#ffffff 60%,#f4f4f4 100%)"></div>
<div style="position:absolute;left:1088.6000000000001px;top:2.2px;width:106.8999999999999px;height:16.5px;background:#2f86de"></div>
<div style="position:absolute;left:1088.6000000000001px;top:19.8px;width:106.8999999999999px;height:19.2px;background:linear-gradient(#a8a8a8 0%,#e4e4e4 12%,#fafafa 30%,#ffffff 60%,#f4f4f4 100%)"></div>
<div style="position:absolute;left:652.80px;top:5.15px;white-space:pre;font:italic 700 11px/11px 'Liberation Sans', sans-serif;color:#1a1a1a;-webkit-text-stroke:0.3px #1a1a1a;transform:scaleX(0.6811);transform-origin:0 0;">Berlin-Paris-Vienna-Belgrade</div>
<div style="position:absolute;left:762.00px;top:5.61px;white-space:pre;font:italic 700 11.5px/11.5px 'Liberation Sans', sans-serif;color:#1a1a1a;-webkit-text-stroke:0.3px #1a1a1a;transform:scaleX(0.7064);transform-origin:0 0;">Lučenec-Slovakia_R.Dávid</div>
<div style="position:absolute;left:923.15px;width:0;display:flex;justify-content:center;top:3.39px;height:14px;"><span style="white-space:pre;font:italic 700 14px/14px 'Liberation Sans', sans-serif;color:#111;-webkit-text-stroke:0.12px #111;transform:scaleX(0.7966);transform-origin:50% 0;display:inline-block;">Moscow</span></div>
<div style="position:absolute;left:1032.70px;width:0;display:flex;justify-content:center;top:3.39px;height:14px;"><span style="white-space:pre;font:italic 700 14px/14px 'Liberation Sans', sans-serif;color:#111;-webkit-text-stroke:0.12px #111;transform:scaleX(0.7457);transform-origin:50% 0;display:inline-block;">Dubai</span></div>
<div style="position:absolute;left:1091.50px;top:5.65px;white-space:pre;font:italic 700 11px/11px 'Liberation Sans', sans-serif;color:#1a1a1a;-webkit-text-stroke:0.3px #1a1a1a;transform:scaleX(0.7283);transform-origin:0 0;">Rabat-Casablanca-London</div>
<div style="position:absolute;left:656.90px;top:24.53px;white-space:pre;font:400 13px/13px 'Liberation Sans', sans-serif;color:#111;-webkit-text-stroke:0.45px #111;transform:scaleX(0.6510);transform-origin:0 0;">Tue, Oct 3</div>
<div style="position:absolute;left:721.70px;top:24.53px;white-space:pre;font:400 13px/13px 'Liberation Sans', sans-serif;color:#111;-webkit-text-stroke:0.45px #111;transform:scaleX(0.6205);transform-origin:0 0;">08:11:50</div>
<div style="position:absolute;left:709.80px;top:20.91px;white-space:pre;font:400 8px/8px 'Liberation Sans', sans-serif;color:#111;-webkit-text-stroke:0.35px #111;transform:scaleX(0.6247);transform-origin:0 0;">+1</div>
<div style="position:absolute;left:705.00px;top:29.31px;white-space:pre;font:400 8px/8px 'Liberation Sans', sans-serif;color:#111;-webkit-text-stroke:0.35px #111;transform:scaleX(0.6500);transform-origin:0 0;">DST</div>
<div style="position:absolute;left:766.40px;top:24.53px;white-space:pre;font:400 13px/13px 'Liberation Sans', sans-serif;color:#111;-webkit-text-stroke:0.45px #111;transform:scaleX(0.6510);transform-origin:0 0;">Tue, Oct 3</div>
<div style="position:absolute;left:831.20px;top:24.53px;white-space:pre;font:400 13px/13px 'Liberation Sans', sans-serif;color:#111;-webkit-text-stroke:0.45px #111;transform:scaleX(0.6205);transform-origin:0 0;">08:11:50</div>
<div style="position:absolute;left:819.30px;top:20.91px;white-space:pre;font:400 8px/8px 'Liberation Sans', sans-serif;color:#111;-webkit-text-stroke:0.35px #111;transform:scaleX(0.6247);transform-origin:0 0;">+1</div>
<div style="position:absolute;left:814.50px;top:29.31px;white-space:pre;font:400 8px/8px 'Liberation Sans', sans-serif;color:#111;-webkit-text-stroke:0.35px #111;transform:scaleX(0.6500);transform-origin:0 0;">DST</div>
<div style="position:absolute;left:876.20px;top:24.53px;white-space:pre;font:400 13px/13px 'Liberation Sans', sans-serif;color:#111;-webkit-text-stroke:0.45px #111;transform:scaleX(0.6510);transform-origin:0 0;">Tue, Oct 3</div>
<div style="position:absolute;left:941.00px;top:24.53px;white-space:pre;font:400 13px/13px 'Liberation Sans', sans-serif;color:#111;-webkit-text-stroke:0.45px #111;transform:scaleX(0.6205);transform-origin:0 0;">09:11:50</div>
<div style="position:absolute;left:929.10px;top:20.91px;white-space:pre;font:400 8px/8px 'Liberation Sans', sans-serif;color:#111;-webkit-text-stroke:0.35px #111;transform:scaleX(0.6247);transform-origin:0 0;">+3</div>
<div style="position:absolute;left:985.90px;top:24.53px;white-space:pre;font:400 13px/13px 'Liberation Sans', sans-serif;color:#111;-webkit-text-stroke:0.45px #111;transform:scaleX(0.6510);transform-origin:0 0;">Tue, Oct 3</div>
<div style="position:absolute;left:1050.70px;top:24.53px;white-space:pre;font:400 13px/13px 'Liberation Sans', sans-serif;color:#111;-webkit-text-stroke:0.45px #111;transform:scaleX(0.6205);transform-origin:0 0;">10:11:50</div>
<div style="position:absolute;left:1038.80px;top:20.91px;white-space:pre;font:400 8px/8px 'Liberation Sans', sans-serif;color:#111;-webkit-text-stroke:0.35px #111;transform:scaleX(0.6247);transform-origin:0 0;">+4</div>
<div style="position:absolute;left:1095.30px;top:24.53px;white-space:pre;font:400 13px/13px 'Liberation Sans', sans-serif;color:#111;-webkit-text-stroke:0.45px #111;transform:scaleX(0.6510);transform-origin:0 0;">Tue, Oct 3</div>
<div style="position:absolute;left:1160.10px;top:24.53px;white-space:pre;font:400 13px/13px 'Liberation Sans', sans-serif;color:#111;-webkit-text-stroke:0.45px #111;transform:scaleX(0.6205);transform-origin:0 0;">07:11:50</div>
<div style="position:absolute;left:1148.20px;top:20.91px;white-space:pre;font:400 8px/8px 'Liberation Sans', sans-serif;color:#111;-webkit-text-stroke:0.35px #111;transform:scaleX(0.6247);transform-origin:0 0;">+1</div>
<div style="position:absolute;left:649px;top:38.8px;width:548px;height:1.6px;background:#454545"></div>
<div style="position:absolute;left:650px;top:40.5px;width:550px;height:4.5px;background:#fff"></div>
<div style="position:absolute;left:650px;top:45px;width:535px;height:15px;background:#000"></div>
<div style="position:absolute;left:650px;top:45px;width:4px;height:15px;background:#808080"></div>
<div style="position:absolute;left:650.50px;top:46.66px;white-space:pre;font:400 12px/12px 'Liberation Mono', monospace;color:#c4c4c4;-webkit-text-stroke:0.1px #c4c4c4;transform:scaleX(0.6970);transform-origin:0 0;">C:\Users\Roman Dávid&gt;Signal Monitoring_PF 4.5m_LC/SK_EUT 21B-21.5°E_11 599.054 MHz Chada FM_3.10.2023+</div>
<div style="position:absolute;left:1185px;top:44px;width:11px;height:17px;background:#fafafa"></div>
<svg style="position:absolute;left:1187px;top:47px" width="8" height="14" viewBox="0 0 8 14"><path d="M1.5 5 L4 2.5 L6.5 5 M1.5 9 L4 11.5 L6.5 9" stroke="#505050" stroke-width="0.9" fill="none"/></svg>
<div style="position:absolute;left:650px;top:60px;width:550px;height:7px;background:linear-gradient(#c8c8c8,#f0f0f0)"></div>
<div style="position:absolute;left:290px;top:162.5px;width:361px;height:472.0px;background:#fff;box-shadow:0 1px 7px rgba(70,70,20,0.2);border:1px solid #d0d0c8;box-sizing:border-box"></div>
<div style="position:absolute;left:295.20px;top:170.94px;white-space:pre;font:400 10px/10px 'Liberation Sans', sans-serif;color:#a0a0a0;-webkit-text-stroke:0px #a0a0a0;transform:scaleX(0.7341);transform-origin:0 0;">PIDs Management</div>
<div style="position:absolute;left:638px;top:169px;width:12.5px;height:16px;background:#e6e6e6"></div>
<div style="position:absolute;left:644.20px;width:0;display:flex;justify-content:center;top:173.59px;height:7px;"><span style="white-space:pre;font:400 7px/7px 'Liberation Sans', sans-serif;color:#c0c0c0;-webkit-text-stroke:0.25px #c0c0c0;display:inline-block;">x</span></div>
<div style="position:absolute;left:300.60px;top:199.65px;white-space:pre;font:400 11px/11px 'Liberation Sans', sans-serif;color:#2424c8;-webkit-text-stroke:0.25px #2424c8;transform:scaleX(0.7595);transform-origin:0 0;">PIDs Stats &amp; Filtering</div>
<div style="position:absolute;left:312.60px;top:214.58px;white-space:pre;font:400 9.5px/9.5px 'Liberation Sans', sans-serif;color:#3a3a3a;-webkit-text-stroke:0.25px #3a3a3a;transform:scaleX(0.7525);transform-origin:0 0;">In: 329 Kbps, out: 329 Kbps | 8 PIDs on the list which 0 of them are scr.</div>
<svg style="position:absolute;left:615px;top:195px" width="30" height="32" viewBox="615 195 30 32"><ellipse cx="628.2" cy="208.4" rx="6.2" ry="8.2" fill="#e2f0fa" stroke="#b8bcc0" stroke-width="1.5"/><ellipse cx="627.8" cy="206.5" rx="3.6" ry="4.5" fill="#f2f9ff"/><path d="M633.8 217.2 L637.2 222.2" stroke="#2a2a2a" stroke-width="2.6" stroke-linecap="round"/><rect x="621.5" y="212" width="3.3" height="11" rx="0.6" fill="#8ccc40"/><rect x="624.9" y="213.8" width="2.7" height="9.2" rx="0.5" fill="#ec9a50"/><rect x="627.7" y="216.6" width="2.4" height="6.4" rx="0.5" fill="#50b0e8"/></svg>
<div style="position:absolute;left:290px;top:232px;width:361px;height:1.5px;background:#6a6a6a"></div>
<div style="position:absolute;left:337px;top:233.5px;width:1px;height:322px;background:#eeeeee"></div>
<div style="position:absolute;left:414.7px;top:233.5px;width:1px;height:322px;background:#eeeeee"></div>
<div style="position:absolute;left:500.8px;top:233.5px;width:1px;height:322px;background:#eeeeee"></div>
<div style="position:absolute;left:575.3px;top:233.5px;width:1px;height:322px;background:#eeeeee"></div>
<div style="position:absolute;left:613.5px;top:233.5px;width:1px;height:322px;background:#eeeeee"></div>
<svg style="position:absolute;left:309px;top:231px" width="9" height="6" viewBox="0 0 9 6"><path d="M1 5 L4.5 1.5 L8 5" stroke="#8a8a8a" stroke-width="0.9" fill="none"/></svg>
<div style="position:absolute;left:292.80px;top:237.94px;white-space:pre;font:400 10px/10px 'Liberation Sans', sans-serif;color:#1a1a1a;-webkit-text-stroke:0.25px #1a1a1a;transform:scaleX(0.6926);transform-origin:0 0;">#PID</div>
<div style="position:absolute;left:340.50px;top:237.94px;white-space:pre;font:400 10px/10px 'Liberation Sans', sans-serif;color:#1a1a1a;-webkit-text-stroke:0.25px #1a1a1a;transform:scaleX(0.7415);transform-origin:0 0;">Description</div>
<div style="position:absolute;left:418.70px;top:237.94px;white-space:pre;font:400 10px/10px 'Liberation Sans', sans-serif;color:#1a1a1a;-webkit-text-stroke:0.25px #1a1a1a;transform:scaleX(0.6762);transform-origin:0 0;">BitRate (max: 127,78 Kb...</div>
<div style="position:absolute;left:505.50px;top:237.94px;white-space:pre;font:400 10px/10px 'Liberation Sans', sans-serif;color:#1a1a1a;-webkit-text-stroke:0.25px #1a1a1a;transform:scaleX(0.6935);transform-origin:0 0;">Used</div>
<div style="position:absolute;left:579.30px;top:237.94px;white-space:pre;font:400 10px/10px 'Liberation Sans', sans-serif;color:#1a1a1a;-webkit-text-stroke:0.25px #1a1a1a;transform:scaleX(0.6661);transform-origin:0 0;">Packets</div>
<div style="position:absolute;left:617.30px;top:237.94px;white-space:pre;font:400 10px/10px 'Liberation Sans', sans-serif;color:#1a1a1a;-webkit-text-stroke:0.25px #1a1a1a;transform:scaleX(0.7285);transform-origin:0 0;">Missing</div>
<div style="position:absolute;left:291px;top:266.21999999999997px;width:359px;height:1px;background:#efefef"></div>
<div style="position:absolute;left:291px;top:280.84px;width:359px;height:1px;background:#efefef"></div>
<div style="position:absolute;left:291px;top:295.46px;width:359px;height:1px;background:#efefef"></div>
<div style="position:absolute;left:291px;top:310.08px;width:359px;height:1px;background:#efefef"></div>
<div style="position:absolute;left:291px;top:324.7px;width:359px;height:1px;background:#efefef"></div>
<div style="position:absolute;left:291px;top:339.32px;width:359px;height:1px;background:#efefef"></div>
<div style="position:absolute;left:291px;top:353.94px;width:359px;height:1px;background:#efefef"></div>
<div style="position:absolute;left:291px;top:368.56px;width:359px;height:1px;background:#efefef"></div>
<div style="position:absolute;left:291px;top:383.17999999999995px;width:359px;height:1px;background:#efefef"></div>
<div style="position:absolute;left:291px;top:397.79999999999995px;width:359px;height:1px;background:#efefef"></div>
<div style="position:absolute;left:291px;top:412.41999999999996px;width:359px;height:1px;background:#efefef"></div>
<div style="position:absolute;left:291px;top:427.03999999999996px;width:359px;height:1px;background:#efefef"></div>
<div style="position:absolute;left:291px;top:441.65999999999997px;width:359px;height:1px;background:#efefef"></div>
<div style="position:absolute;left:291px;top:456.28px;width:359px;height:1px;background:#efefef"></div>
<div style="position:absolute;left:291px;top:470.9px;width:359px;height:1px;background:#efefef"></div>
<div style="position:absolute;left:291px;top:485.52px;width:359px;height:1px;background:#efefef"></div>
<div style="position:absolute;left:291px;top:500.14px;width:359px;height:1px;background:#efefef"></div>
<div style="position:absolute;left:291px;top:514.76px;width:359px;height:1px;background:#efefef"></div>
<div style="position:absolute;left:291px;top:529.38px;width:359px;height:1px;background:#efefef"></div>
<div style="position:absolute;left:291px;top:544.0px;width:359px;height:1px;background:#efefef"></div>
<div style="position:absolute;left:292px;top:254.6px;width:8.5px;height:10.5px;background:#fff;border:1px solid #505050;box-sizing:border-box"></div>
<div style="position:absolute;left:305.80px;top:255.79px;white-space:pre;font:400 9.5px/9.5px 'Liberation Sans', sans-serif;color:#1a1a1a;-webkit-text-stroke:0.25px #1a1a1a;transform:scaleX(0.7363);transform-origin:0 0;">0</div>
<div style="position:absolute;left:340px;top:260.90999999999997px;width:2px;height:1.2px;background:#222"></div>
<div style="position:absolute;left:417.50px;top:255.79px;white-space:pre;font:400 9.5px/9.5px 'Liberation Sans', sans-serif;color:#1a1a1a;-webkit-text-stroke:0.25px #1a1a1a;transform:scaleX(0.7103);transform-origin:0 0;">4,41 Kbps</div>
<div style="position:absolute;left:502.5px;top:254.0px;width:62.5px;height:11.3px;background:#e4e4e4;border:1px solid #c4c4c4;box-sizing:border-box"></div>
<div style="position:absolute;left:503px;top:254.5px;width:1.845px;height:10.3px;background:#0fab24"></div>
<div style="position:absolute;left:578.40px;top:255.79px;white-space:pre;font:400 9.5px/9.5px 'Liberation Sans', sans-serif;color:#1a1a1a;-webkit-text-stroke:0.25px #1a1a1a;transform:scaleX(0.7188);transform-origin:0 0;">419</div>
<div style="position:absolute;left:616.40px;top:255.79px;white-space:pre;font:400 9.5px/9.5px 'Liberation Sans', sans-serif;color:#1a1a1a;-webkit-text-stroke:0.25px #1a1a1a;transform:scaleX(0.7174);transform-origin:0 0;">0</div>
<div style="position:absolute;left:292px;top:269.21999999999997px;width:8.5px;height:10.5px;background:#fff;border:1px solid #505050;box-sizing:border-box"></div>
<div style="position:absolute;left:305.80px;top:270.41px;white-space:pre;font:400 9.5px/9.5px 'Liberation Sans', sans-serif;color:#1a1a1a;-webkit-text-stroke:0.25px #1a1a1a;transform:scaleX(0.6747);transform-origin:0 0;">101</div>
<div style="position:absolute;left:340px;top:275.53px;width:2px;height:1.2px;background:#222"></div>
<div style="position:absolute;left:417.50px;top:270.41px;white-space:pre;font:400 9.5px/9.5px 'Liberation Sans', sans-serif;color:#1a1a1a;-webkit-text-stroke:0.25px #1a1a1a;transform:scaleX(0.7178);transform-origin:0 0;">127,78 Kbps</div>
<div style="position:absolute;left:502.5px;top:268.61999999999995px;width:62.5px;height:11.3px;background:#e4e4e4;border:1px solid #c4c4c4;box-sizing:border-box"></div>
<div style="position:absolute;left:503px;top:269.11999999999995px;width:61.5px;height:10.3px;background:#0fab24"></div>
<div style="position:absolute;left:578.40px;top:270.41px;white-space:pre;font:400 9.5px/9.5px 'Liberation Sans', sans-serif;color:#1a1a1a;-webkit-text-stroke:0.25px #1a1a1a;transform:scaleX(0.7232);transform-origin:0 0;">11445</div>
<div style="position:absolute;left:616.40px;top:270.41px;white-space:pre;font:400 9.5px/9.5px 'Liberation Sans', sans-serif;color:#1a1a1a;-webkit-text-stroke:0.25px #1a1a1a;transform:scaleX(0.7174);transform-origin:0 0;">0</div>
<div style="position:absolute;left:292px;top:283.84px;width:8.5px;height:10.5px;background:#fff;border:1px solid #505050;box-sizing:border-box"></div>
<div style="position:absolute;left:305.80px;top:285.03px;white-space:pre;font:400 9.5px/9.5px 'Liberation Sans', sans-serif;color:#1a1a1a;-webkit-text-stroke:0.25px #1a1a1a;transform:scaleX(0.7125);transform-origin:0 0;">102</div>
<div style="position:absolute;left:340px;top:290.15px;width:2px;height:1.2px;background:#222"></div>
<div style="position:absolute;left:417.50px;top:285.03px;white-space:pre;font:400 9.5px/9.5px 'Liberation Sans', sans-serif;color:#1a1a1a;-webkit-text-stroke:0.25px #1a1a1a;transform:scaleX(0.7103);transform-origin:0 0;">4,41 Kbps</div>
<div style="position:absolute;left:502.5px;top:283.23999999999995px;width:62.5px;height:11.3px;background:#e4e4e4;border:1px solid #c4c4c4;box-sizing:border-box"></div>
<div style="position:absolute;left:503px;top:283.73999999999995px;width:1.845px;height:10.3px;background:#0fab24"></div>
<div style="position:absolute;left:578.40px;top:285.03px;white-space:pre;font:400 9.5px/9.5px 'Liberation Sans', sans-serif;color:#1a1a1a;-webkit-text-stroke:0.25px #1a1a1a;transform:scaleX(0.7188);transform-origin:0 0;">409</div>
<div style="position:absolute;left:616.40px;top:285.03px;white-space:pre;font:400 9.5px/9.5px 'Liberation Sans', sans-serif;color:#1a1a1a;-webkit-text-stroke:0.25px #1a1a1a;transform:scaleX(0.7174);transform-origin:0 0;">0</div>
<div style="position:absolute;left:292px;top:298.46px;width:8.5px;height:10.5px;background:#fff;border:1px solid #505050;box-sizing:border-box"></div>
<div style="position:absolute;left:305.80px;top:299.65px;white-space:pre;font:400 9.5px/9.5px 'Liberation Sans', sans-serif;color:#1a1a1a;-webkit-text-stroke:0.25px #1a1a1a;transform:scaleX(0.7062);transform-origin:0 0;">201</div>
<div style="position:absolute;left:340px;top:304.77px;width:2px;height:1.2px;background:#222"></div>
<div style="position:absolute;left:417.50px;top:299.65px;white-space:pre;font:400 9.5px/9.5px 'Liberation Sans', sans-serif;color:#1a1a1a;-webkit-text-stroke:0.25px #1a1a1a;transform:scaleX(0.7178);transform-origin:0 0;">127,78 Kbps</div>
<div style="position:absolute;left:502.5px;top:297.85999999999996px;width:62.5px;height:11.3px;background:#e4e4e4;border:1px solid #c4c4c4;box-sizing:border-box"></div>
<div style="position:absolute;left:503px;top:298.35999999999996px;width:61.5px;height:10.3px;background:#0fab24"></div>
<div style="position:absolute;left:578.40px;top:299.65px;white-space:pre;font:400 9.5px/9.5px 'Liberation Sans', sans-serif;color:#1a1a1a;-webkit-text-stroke:0.25px #1a1a1a;transform:scaleX(0.7232);transform-origin:0 0;">11445</div>
<div style="position:absolute;left:616.40px;top:299.65px;white-space:pre;font:400 9.5px/9.5px 'Liberation Sans', sans-serif;color:#1a1a1a;-webkit-text-stroke:0.25px #1a1a1a;transform:scaleX(0.7174);transform-origin:0 0;">0</div>
<div style="position:absolute;left:292px;top:313.08px;width:8.5px;height:10.5px;background:#fff;border:1px solid #505050;box-sizing:border-box"></div>
<div style="position:absolute;left:305.80px;top:314.27px;white-space:pre;font:400 9.5px/9.5px 'Liberation Sans', sans-serif;color:#1a1a1a;-webkit-text-stroke:0.25px #1a1a1a;transform:scaleX(0.7377);transform-origin:0 0;">202</div>
<div style="position:absolute;left:340px;top:319.39px;width:2px;height:1.2px;background:#222"></div>
<div style="position:absolute;left:417.50px;top:314.27px;white-space:pre;font:400 9.5px/9.5px 'Liberation Sans', sans-serif;color:#1a1a1a;-webkit-text-stroke:0.25px #1a1a1a;transform:scaleX(0.7103);transform-origin:0 0;">4,41 Kbps</div>
<div style="position:absolute;left:502.5px;top:312.47999999999996px;width:62.5px;height:11.3px;background:#e4e4e4;border:1px solid #c4c4c4;box-sizing:border-box"></div>
<div style="position:absolute;left:503px;top:312.97999999999996px;width:1.845px;height:10.3px;background:#0fab24"></div>
<div style="position:absolute;left:578.40px;top:314.27px;white-space:pre;font:400 9.5px/9.5px 'Liberation Sans', sans-serif;color:#1a1a1a;-webkit-text-stroke:0.25px #1a1a1a;transform:scaleX(0.7188);transform-origin:0 0;">410</div>
<div style="position:absolute;left:616.40px;top:314.27px;white-space:pre;font:400 9.5px/9.5px 'Liberation Sans', sans-serif;color:#1a1a1a;-webkit-text-stroke:0.25px #1a1a1a;transform:scaleX(0.7174);transform-origin:0 0;">0</div>
<div style="position:absolute;left:292px;top:327.7px;width:8.5px;height:10.5px;background:#fff;border:1px solid #505050;box-sizing:border-box"></div>
<div style="position:absolute;left:305.80px;top:328.89px;white-space:pre;font:400 9.5px/9.5px 'Liberation Sans', sans-serif;color:#1a1a1a;-webkit-text-stroke:0.25px #1a1a1a;transform:scaleX(0.7285);transform-origin:0 0;">8190</div>
<div style="position:absolute;left:340px;top:334.01px;width:2px;height:1.2px;background:#222"></div>
<div style="position:absolute;left:417.50px;top:328.89px;white-space:pre;font:400 9.5px/9.5px 'Liberation Sans', sans-serif;color:#1a1a1a;-webkit-text-stroke:0.25px #1a1a1a;transform:scaleX(0.7127);transform-origin:0 0;">1,47 Kbps</div>
<div style="position:absolute;left:502.5px;top:327.09999999999997px;width:62.5px;height:11.3px;background:#e4e4e4;border:1px solid #c4c4c4;box-sizing:border-box"></div>
<div style="position:absolute;left:503px;top:327.59999999999997px;width:1.5px;height:10.3px;background:#0fab24"></div>
<div style="position:absolute;left:578.40px;top:328.89px;white-space:pre;font:400 9.5px/9.5px 'Liberation Sans', sans-serif;color:#1a1a1a;-webkit-text-stroke:0.25px #1a1a1a;transform:scaleX(0.6901);transform-origin:0 0;">52</div>
<div style="position:absolute;left:616.40px;top:328.89px;white-space:pre;font:400 9.5px/9.5px 'Liberation Sans', sans-serif;color:#1a1a1a;-webkit-text-stroke:0.25px #1a1a1a;transform:scaleX(0.7174);transform-origin:0 0;">0</div>
<div style="position:absolute;left:292px;top:342.32px;width:8.5px;height:10.5px;background:#fff;border:1px solid #505050;box-sizing:border-box"></div>
<div style="position:absolute;left:305.80px;top:343.51px;white-space:pre;font:400 9.5px/9.5px 'Liberation Sans', sans-serif;color:#1a1a1a;-webkit-text-stroke:0.25px #1a1a1a;transform:scaleX(0.6859);transform-origin:0 0;">8191</div>
<div style="position:absolute;left:340px;top:348.63px;width:2px;height:1.2px;background:#222"></div>
<div style="position:absolute;left:417.50px;top:343.51px;white-space:pre;font:400 9.5px/9.5px 'Liberation Sans', sans-serif;color:#1a1a1a;-webkit-text-stroke:0.25px #1a1a1a;transform:scaleX(0.7176);transform-origin:0 0;">58,75 Kbps</div>
<div style="position:absolute;left:502.5px;top:341.71999999999997px;width:62.5px;height:11.3px;background:#e4e4e4;border:1px solid #c4c4c4;box-sizing:border-box"></div>
<div style="position:absolute;left:503px;top:342.21999999999997px;width:28.290000000000003px;height:10.3px;background:#0fab24"></div>
<div style="position:absolute;left:578.40px;top:343.51px;white-space:pre;font:400 9.5px/9.5px 'Liberation Sans', sans-serif;color:#1a1a1a;-webkit-text-stroke:0.25px #1a1a1a;transform:scaleX(0.7001);transform-origin:0 0;">5196</div>
<div style="position:absolute;left:616.40px;top:343.51px;white-space:pre;font:400 9.5px/9.5px 'Liberation Sans', sans-serif;color:#1a1a1a;-webkit-text-stroke:0.25px #1a1a1a;transform:scaleX(0.7174);transform-origin:0 0;">0</div>
<div style="position:absolute;left:291px;top:355.54px;width:359px;height:13.42px;background:#d8bc98"></div>
<div style="position:absolute;left:337px;top:355.54px;width:1px;height:13.42px;background:#e6d8c4"></div>
<div style="position:absolute;left:414.7px;top:355.54px;width:1px;height:13.42px;background:#e6d8c4"></div>
<div style="position:absolute;left:500.8px;top:355.54px;width:1px;height:13.42px;background:#e6d8c4"></div>
<div style="position:absolute;left:575.3px;top:355.54px;width:1px;height:13.42px;background:#e6d8c4"></div>
<div style="position:absolute;left:613.5px;top:355.54px;width:1px;height:13.42px;background:#e6d8c4"></div>
<div style="position:absolute;left:292px;top:356.94px;width:8.5px;height:10.5px;background:#fff;border:1px solid #505050;box-sizing:border-box"></div>
<svg style="position:absolute;left:292px;top:356.9px" width="9" height="11" viewBox="0 0 9 11"><path d="M1.8 5.5 L3.8 8 L7.5 2.5" stroke="#202020" stroke-width="1" fill="none"/></svg>
<div style="position:absolute;left:305.80px;top:358.13px;white-space:pre;font:400 9.5px/9.5px 'Liberation Sans', sans-serif;color:#1a1a1a;-webkit-text-stroke:0.25px #1a1a1a;transform:scaleX(0.7285);transform-origin:0 0;">8192</div>
<div style="position:absolute;left:339.80px;top:358.13px;white-space:pre;font:400 9.5px/9.5px 'Liberation Sans', sans-serif;color:#1a1a1a;-webkit-text-stroke:0.25px #1a1a1a;transform:scaleX(0.6848);transform-origin:0 0;">FullTS</div>
<div style="position:absolute;left:417.50px;top:358.13px;white-space:pre;font:400 9.5px/9.5px 'Liberation Sans', sans-serif;color:#1a1a1a;-webkit-text-stroke:0.25px #1a1a1a;transform:scaleX(0.7172);transform-origin:0 0;">329 Kbps</div>
<div style="position:absolute;left:502.5px;top:356.34px;width:62.5px;height:11.3px;background:#e4e4e4;border:1px solid #c4c4c4;box-sizing:border-box"></div>
<div style="position:absolute;left:503px;top:356.84px;width:61.5px;height:10.3px;background:#0fab24"></div>
<div style="position:absolute;left:578.40px;top:358.13px;white-space:pre;font:400 9.5px/9.5px 'Liberation Sans', sans-serif;color:#1a1a1a;-webkit-text-stroke:0.25px #1a1a1a;transform:scaleX(0.6796);transform-origin:0 0;">0</div>
<div style="position:absolute;left:616.40px;top:358.13px;white-space:pre;font:400 9.5px/9.5px 'Liberation Sans', sans-serif;color:#1a1a1a;-webkit-text-stroke:0.25px #1a1a1a;transform:scaleX(0.7174);transform-origin:0 0;">0</div>
<div style="position:absolute;left:291px;top:556px;width:359px;height:77.5px;background:#f0f0f0"></div>
<div style="position:absolute;left:292px;top:559px;width:355px;height:26px;background:#f0f0f0;border:1px solid #b8b8b8;box-sizing:border-box"></div>
<div style="position:absolute;left:380.7px;top:560px;width:1.5px;height:24px;background:#c0c0c0"></div>
<div style="position:absolute;left:469px;top:560px;width:1.5px;height:24px;background:#c0c0c0"></div>
<div style="position:absolute;left:557.4px;top:560px;width:1.5px;height:24px;background:#c0c0c0"></div>
<div style="position:absolute;left:337.00px;width:0;display:flex;justify-content:center;top:569.13px;height:10px;"><span style="white-space:pre;font:400 10px/10px 'Liberation Sans', sans-serif;color:#4a4a4a;-webkit-text-stroke:0.05px #4a4a4a;transform:scaleX(0.6852);transform-origin:50% 0;display:inline-block;">UP: 00:02:05</span></div>
<div style="position:absolute;left:425.00px;width:0;display:flex;justify-content:center;top:569.13px;height:10px;"><span style="white-space:pre;font:400 10px/10px 'Liberation Sans', sans-serif;color:#333;-webkit-text-stroke:0.05px #333;transform:scaleX(0.6943);transform-origin:50% 0;display:inline-block;">SYN: 0</span></div>
<div style="position:absolute;left:513.00px;width:0;display:flex;justify-content:center;top:569.13px;height:10px;"><span style="white-space:pre;font:400 10px/10px 'Liberation Sans', sans-serif;color:#333;-webkit-text-stroke:0.05px #333;transform:scaleX(0.7494);transform-origin:50% 0;display:inline-block;">TEI: 0</span></div>
<div style="position:absolute;left:601.50px;width:0;display:flex;justify-content:center;top:569.13px;height:10px;"><span style="white-space:pre;font:400 10px/10px 'Liberation Sans', sans-serif;color:#333;-webkit-text-stroke:0.05px #333;transform:scaleX(0.7433);transform-origin:50% 0;display:inline-block;">CC: 0</span></div>
<div style="position:absolute;left:313.8px;top:597px;width:253.6px;height:26.6px;border:1px solid #dcdcdc;box-sizing:border-box"></div>
<div style="position:absolute;left:318px;top:592px;width:22px;height:10px;background:#f0f0f0"></div>
<div style="position:absolute;left:319.50px;top:592.18px;white-space:pre;font:400 9.5px/9.5px 'Liberation Sans', sans-serif;color:#222;-webkit-text-stroke:0.25px #222;transform:scaleX(0.7784);transform-origin:0 0;">Show</div>
<div style="position:absolute;left:296px;top:601.7px;width:11.4px;height:14.3px;background:#007a10"></div>
<div style="position:absolute;left:318px;top:602.4px;width:246px;height:17px;background:#e6e6e6;border:1px solid #acacac;box-sizing:border-box"></div>
<div style="position:absolute;left:320.50px;top:606.38px;white-space:pre;font:400 9.5px/9.5px 'Liberation Sans', sans-serif;color:#1a1a1a;-webkit-text-stroke:0.25px #1a1a1a;transform:scaleX(0.7179);transform-origin:0 0;">Only active PIDS of the TS</div>
<svg style="position:absolute;left:553px;top:608px" width="7" height="5" viewBox="0 0 7 5"><path d="M0.5 0.8 L3.5 3.8 L6.5 0.8" stroke="#505050" stroke-width="0.9" fill="none"/></svg>
<div style="position:absolute;left:572px;top:598.5px;width:17px;height:25px;background:#e1e1e1;border:1px solid #adadad;box-sizing:border-box"></div>
<div style="position:absolute;left:580.50px;width:0;display:flex;justify-content:center;top:606.62px;height:9px;"><span style="white-space:pre;font:400 9px/9px 'Liberation Sans', sans-serif;color:#222;-webkit-text-stroke:0.25px #222;display:inline-block;">?</span></div>
<div style="position:absolute;left:593.8px;top:598.5px;width:50px;height:25px;background:#e1e1e1;border:1px solid #adadad;box-sizing:border-box"></div>
<div style="position:absolute;left:618.80px;width:0;display:flex;justify-content:center;top:606.38px;height:9.5px;"><span style="white-space:pre;font:400 9.5px/9.5px 'Liberation Sans', sans-serif;color:#222;-webkit-text-stroke:0.25px #222;transform:scaleX(0.7153);transform-origin:50% 0;display:inline-block;">Reset stats</span></div>
<div style="position:absolute;left:666.5px;top:161px;width:366.5px;height:486.5px;background:#f0f0f0;box-shadow:0 1px 7px rgba(70,70,20,0.2);border:1px solid #c8c8c0;box-sizing:border-box"></div>
<div style="position:absolute;left:667.5px;top:162px;width:364.5px;height:44px;background:#fff"></div>
<svg style="position:absolute;left:672px;top:167px" width="10" height="14" viewBox="0 0 10 14"><path d="M3.6 0.6 H6.4 L9 12 H1 Z" fill="#f08a10"/><path d="M3 4 H7 L7.6 6.5 H2.4 Z" fill="#e8e8e8"/><path d="M0.2 11 H9.8 L9.6 13.6 H0.4 Z" fill="#f07a00"/></svg>
<div style="position:absolute;left:685.80px;top:170.13px;white-space:pre;font:400 10px/10px 'Liberation Sans', sans-serif;color:#5a5a5a;-webkit-text-stroke:0.05px #5a5a5a;transform:scaleX(0.6965);transform-origin:0 0;">() - 11599 Horizontal 255,993 / RF: -44 SNR: 17,2 | Eutelsat 21B &amp; SES 16 @ TB...</div>
<div style="position:absolute;left:957px;top:174px;width:7px;height:1px;background:#707070"></div>
<div style="position:absolute;left:985px;top:170px;width:7.5px;height:9px;border:1px solid #888;border-radius:1px;box-sizing:border-box"></div>
<svg style="position:absolute;left:1014px;top:170px" width="8" height="8" viewBox="0 0 8 8"><path d="M0.3 0.3 L7.7 7.7 M7.7 0.3 L0.3 7.7" stroke="#777" stroke-width="0.8"/></svg>
<div style="position:absolute;left:672.50px;top:192.63px;white-space:pre;font:400 10px/10px 'Liberation Sans', sans-serif;color:#a4a4a4;-webkit-text-stroke:0px #a4a4a4;transform:scaleX(0.7729);transform-origin:0 0;">Médium</div>
<div style="position:absolute;left:710.80px;top:192.63px;white-space:pre;font:400 10px/10px 'Liberation Sans', sans-serif;color:#a4a4a4;-webkit-text-stroke:0px #a4a4a4;transform:scaleX(0.7084);transform-origin:0 0;">Prehrávanie</div>
<div style="position:absolute;left:760.00px;top:192.63px;white-space:pre;font:400 10px/10px 'Liberation Sans', sans-serif;color:#a4a4a4;-webkit-text-stroke:0px #a4a4a4;transform:scaleX(0.7291);transform-origin:0 0;">Zvuk</div>
<div style="position:absolute;left:785.80px;top:192.63px;white-space:pre;font:400 10px/10px 'Liberation Sans', sans-serif;color:#a4a4a4;-webkit-text-stroke:0px #a4a4a4;transform:scaleX(0.7164);transform-origin:0 0;">Video</div>
<div style="position:absolute;left:815.00px;top:192.63px;white-space:pre;font:400 10px/10px 'Liberation Sans', sans-serif;color:#a4a4a4;-webkit-text-stroke:0px #a4a4a4;transform:scaleX(0.7606);transform-origin:0 0;">Titulky</div>
<div style="position:absolute;left:846.90px;top:192.63px;white-space:pre;font:400 10px/10px 'Liberation Sans', sans-serif;color:#a4a4a4;-webkit-text-stroke:0px #a4a4a4;transform:scaleX(0.7490);transform-origin:0 0;">Nástroje</div>
<div style="position:absolute;left:884.90px;top:192.63px;white-space:pre;font:400 10px/10px 'Liberation Sans', sans-serif;color:#a4a4a4;-webkit-text-stroke:0px #a4a4a4;transform:scaleX(0.7680);transform-origin:0 0;">Zobraziť</div>
<div style="position:absolute;left:922.90px;top:192.63px;white-space:pre;font:400 10px/10px 'Liberation Sans', sans-serif;color:#a4a4a4;-webkit-text-stroke:0px #a4a4a4;transform:scaleX(0.7826);transform-origin:0 0;">Pomocník</div>
<div style="position:absolute;left:667.5px;top:206px;width:364.5px;height:397px;background:#000"></div>
<svg style="position:absolute;left:810px;top:348px" width="78" height="114" viewBox="810 348 78 114">
<defs>
<linearGradient id="cg" x1="0" x2="1"><stop offset="0" stop-color="#e46a00"/><stop offset="0.35" stop-color="#ff9a1a"/><stop offset="0.6" stop-color="#f58a10"/><stop offset="1" stop-color="#d85a00"/></linearGradient>
<linearGradient id="wg" x1="0" x2="1"><stop offset="0" stop-color="#c0c0c0"/><stop offset="0.4" stop-color="#e8e8e8"/><stop offset="1" stop-color="#b8b8b8"/></linearGradient>
<linearGradient id="bg2" x1="0" x2="0" y1="0" y2="1"><stop offset="0" stop-color="#f08a00"/><stop offset="0.8" stop-color="#ffa820"/><stop offset="1" stop-color="#ffc050"/></linearGradient>
</defs>
<path d="M823 417.7 H874.7 L883.7 456 Q883.7 457.8 882 457.8 H816.5 Q815 457.8 815 456 Z" fill="url(#bg2)"/>
<path d="M821 452 H877" stroke="#e07800" stroke-width="0.8" opacity="0.6"/>
<path d="M844.5 352.5 Q849.3 350 854 352.5 L871.4 438 Q872 447 849 447 Q826 447 826.9 438 Z" fill="url(#cg)"/>
<path d="M841 366 Q849.3 368.5 857 366 L861.5 388 Q849.3 391 837.2 388 Z" fill="url(#wg)"/>
<path d="M833 406 Q849.3 411 865.5 406 L869.5 430 Q849.3 436 829.2 430 Z" fill="url(#wg)"/>
</svg>
<div style="position:absolute;left:671.00px;top:606.68px;white-space:pre;font:400 9.5px/9.5px 'Liberation Sans', sans-serif;color:#222;-webkit-text-stroke:0.25px #222;transform:scaleX(0.7737);transform-origin:0 0;">00:41</div>
<div style="position:absolute;left:698.6px;top:605.4px;width:299px;height:8.6px;background:linear-gradient(#c8c8c8,#dcdcdc);border-radius:4px"></div>
<div style="position:absolute;right:172.40px;top:606.68px;white-space:pre;font:400 9.5px/9.5px 'Liberation Sans', sans-serif;color:#222;-webkit-text-stroke:0.25px #222;transform:scaleX(0.7499);transform-origin:100% 0;">-00:41</div>
<div style="position:absolute;left:669.2px;top:620px;width:19.5px;height:25px;background:#e8e8e8;border:1px solid #c4c4c4;box-sizing:border-box"></div>
<div style="position:absolute;left:674px;top:625px;width:3px;height:15px;background:#707070"></div>
<div style="position:absolute;left:681px;top:625px;width:3px;height:15px;background:#707070"></div>
<div style="position:absolute;left:696.8px;top:622.4px;width:15.400000000000091px;height:20.899999999999977px;background:#e8e8e8;border:1px solid #c4c4c4;box-sizing:border-box"></div>
<div style="position:absolute;left:714px;top:622.4px;width:14.75px;height:20.899999999999977px;background:#e8e8e8;border:1px solid #c4c4c4;box-sizing:border-box"></div>
<div style="position:absolute;left:729.9px;top:622.4px;width:15.399999999999977px;height:20.899999999999977px;background:#e8e8e8;border:1px solid #c4c4c4;box-sizing:border-box"></div>
<svg style="position:absolute;left:699px;top:627px" width="11" height="11" viewBox="0 0 11 11"><rect x="1" y="2" width="1.6" height="7" fill="#707070"/><path d="M6 2 L2.5 5.5 L6 9Z M9.5 2 L6 5.5 L9.5 9Z" fill="#707070"/></svg>
<div style="position:absolute;left:717.5px;top:629px;width:7.5px;height:8px;background:#707070"></div>
<svg style="position:absolute;left:732px;top:627px" width="11" height="11" viewBox="0 0 11 11"><rect x="8.4" y="2" width="1.6" height="7" fill="#707070"/><path d="M1.5 2 L5 5.5 L1.5 9Z M5 2 L8.5 5.5 L5 9Z" fill="#707070"/></svg>
<div style="position:absolute;left:753.75px;top:622.4px;width:15.049999999999955px;height:20.899999999999977px;background:#d4d4d4;border:1px solid #c4c4c4;box-sizing:border-box"></div>
<div style="position:absolute;left:770.3px;top:622.4px;width:15.400000000000091px;height:20.899999999999977px;background:#e8e8e8;border:1px solid #c4c4c4;box-sizing:border-box"></div>
<svg style="position:absolute;left:756px;top:626px" width="11" height="13" viewBox="0 0 11 13"><path d="M1 4 V1.5 H3.5 M7.5 1.5 H10 V4 M10 9 V11.5 H7.5 M3.5 11.5 H1 V9" stroke="#a8a8a8" stroke-width="1.2" fill="none"/></svg>
<svg style="position:absolute;left:772px;top:626px" width="12" height="14" viewBox="0 0 12 14"><path d="M2 1 V13 M6 1 V13 M10 1 V13" stroke="#707070" stroke-width="1.3"/><rect x="0.5" y="3" width="3" height="2" fill="#707070"/><rect x="4.5" y="8" width="3" height="2" fill="#707070"/><rect x="8.5" y="5" width="3" height="2" fill="#707070"/></svg>
<div style="position:absolute;left:794.2px;top:622.4px;width:14.699999999999932px;height:20.899999999999977px;background:#e8e8e8;border:1px solid #c4c4c4;box-sizing:border-box"></div>
<div style="position:absolute;left:810.7px;top:622.4px;width:14.699999999999932px;height:20.899999999999977px;background:#e8e8e8;border:1px solid #c4c4c4;box-sizing:border-box"></div>
<div style="position:absolute;left:827.3px;top:622.4px;width:14.700000000000045px;height:20.899999999999977px;background:#e8e8e8;border:1px solid #c4c4c4;box-sizing:border-box"></div>
<svg style="position:absolute;left:796px;top:627px" width="11" height="12" viewBox="0 0 11 12"><path d="M1 2 H9 M1 5 H9 M1 8 H6 M1 11 H6" stroke="#707070" stroke-width="1.3"/><path d="M7 8 L10 9.5 L7 11Z" fill="#707070"/></svg>
<svg style="position:absolute;left:812px;top:627px" width="12" height="12" viewBox="0 0 12 12"><path d="M2 6 V3 H9 M10 6 V9 H3" stroke="#707070" stroke-width="1.4" fill="none"/><path d="M8 1 L10.5 3 L8 5Z M4 7 L1.5 9 L4 11Z" fill="#707070"/></svg>
<svg style="position:absolute;left:829px;top:627px" width="12" height="12" viewBox="0 0 12 12"><path d="M1 2 L10 10 M1 10 L4 7 M6 5 L10 1.5" stroke="#707070" stroke-width="1.4" fill="none"/><path d="M7 1 H10.5 V4.5Z M7 10.5 H10.5 V7Z" fill="#707070"/></svg>
<svg style="position:absolute;left:960px;top:633px" width="11" height="11" viewBox="0 0 11 11"><path d="M1 4 H3 L6 1.5 V9.5 L3 7 H1Z" fill="#909090"/><path d="M7.5 3.5 Q9 5.5 7.5 7.5 M8.8 2 Q11 5.5 8.8 9" stroke="#f0a030" stroke-width="1" fill="none"/></svg>
<svg style="position:absolute;left:973px;top:625px" width="48" height="20" viewBox="0 0 48 20"><defs><linearGradient id="vg" x1="0" x2="0" y1="0" y2="1"><stop offset="0" stop-color="#40d040"/><stop offset="1" stop-color="#20c020"/></linearGradient></defs><path d="M1 18.8 L45.6 1.8 Q46.8 1.5 46.8 2.8 V17.8 Q46.8 18.8 45.8 18.8 Z" fill="#f2f2f2" stroke="#7a7a7a" stroke-width="1.1"/><path d="M2 18.2 L34.4 5.9 V18.2Z" fill="url(#vg)"/></svg>
<div style="position:absolute;left:985.00px;width:0;display:flex;justify-content:center;top:626.51px;height:8px;"><span style="white-space:pre;font:400 8px/8px 'Liberation Sans', sans-serif;color:#777;-webkit-text-stroke:0.25px #777;transform:scaleX(0.8117);transform-origin:50% 0;display:inline-block;">92%</span></div>
<div style="position:absolute;left:7.5px;top:785px;width:209.4px;height:11px;background:#8fea8f;border-top:1px solid #bdbdbd;border-left:1px solid #bdbdbd;box-sizing:border-box"></div>
<div style="position:absolute;left:112.20px;width:0;display:flex;justify-content:center;top:786.91px;height:8px;"><span style="white-space:pre;font:italic 400 8px/8px 'Liberation Sans', sans-serif;color:#333;-webkit-text-stroke:0.25px #333;transform:scaleX(0.6919);transform-origin:50% 0;display:inline-block;">PAT (1)</span></div>
<div style="position:absolute;left:221.6px;top:785px;width:209.4px;height:11px;background:#8fea8f;border-top:1px solid #bdbdbd;border-left:1px solid #bdbdbd;box-sizing:border-box"></div>
<div style="position:absolute;left:326.30px;width:0;display:flex;justify-content:center;top:786.91px;height:8px;"><span style="white-space:pre;font:italic 400 8px/8px 'Liberation Sans', sans-serif;color:#333;-webkit-text-stroke:0.25px #333;transform:scaleX(0.6542);transform-origin:50% 0;display:inline-block;">PMT (2)</span></div>
<div style="position:absolute;left:435.5px;top:785px;width:209.5px;height:11px;background:#fe9f78;border-top:1px solid #bdbdbd;border-left:1px solid #bdbdbd;box-sizing:border-box"></div>
<div style="position:absolute;left:540.25px;width:0;display:flex;justify-content:center;top:786.91px;height:8px;"><span style="white-space:pre;font:italic 400 8px/8px 'Liberation Sans', sans-serif;color:#333;-webkit-text-stroke:0.25px #333;transform:scaleX(0.6714);transform-origin:50% 0;display:inline-block;">SDT (0) timeout!</span></div>
<div style="position:absolute;left:649.5px;top:785px;width:209.20000000000005px;height:11px;background:#fe9f78;border-top:1px solid #bdbdbd;border-left:1px solid #bdbdbd;box-sizing:border-box"></div>
<div style="position:absolute;left:754.10px;width:0;display:flex;justify-content:center;top:786.91px;height:8px;"><span style="white-space:pre;font:italic 400 8px/8px 'Liberation Sans', sans-serif;color:#333;-webkit-text-stroke:0.25px #333;transform:scaleX(0.7058);transform-origin:50% 0;display:inline-block;">CAT (0) timeout!</span></div>
<div style="position:absolute;left:863px;top:785px;width:211px;height:11px;background:#fe9f78;border-top:1px solid #bdbdbd;border-left:1px solid #bdbdbd;box-sizing:border-box"></div>
<div style="position:absolute;left:968.50px;width:0;display:flex;justify-content:center;top:786.91px;height:8px;"><span style="white-space:pre;font:italic 400 8px/8px 'Liberation Sans', sans-serif;color:#333;-webkit-text-stroke:0.25px #333;transform:scaleX(0.7017);transform-origin:50% 0;display:inline-block;">NIT (0) timeout!</span></div>
<div style="position:absolute;left:4.7px;top:808.2px;width:38.0px;height:16.299999999999955px;background:linear-gradient(#e4fce4 0%,#c8f4c8 45%,#6cdc6c 50%,#5cd45c 100%);border:1px solid #a8a8a8;border-radius:1px;box-sizing:border-box"></div>
<div style="position:absolute;left:23.70px;width:0;display:flex;justify-content:center;top:812.09px;height:10px;"><span style="white-space:pre;font:400 10px/10px 'Liberation Sans', sans-serif;color:#111;-webkit-text-stroke:0.25px #111;transform:scaleX(0.6890);transform-origin:50% 0;display:inline-block;">Present</span></div>
<div style="position:absolute;left:4.7px;top:828.7px;width:38.0px;height:16.699999999999932px;background:linear-gradient(#e4fce4 0%,#c8f4c8 45%,#6cdc6c 50%,#5cd45c 100%);border:1px solid #a8a8a8;border-radius:1px;box-sizing:border-box"></div>
<div style="position:absolute;left:23.70px;width:0;display:flex;justify-content:center;top:832.78px;height:10px;"><span style="white-space:pre;font:400 10px/10px 'Liberation Sans', sans-serif;color:#111;-webkit-text-stroke:0.25px #111;transform:scaleX(0.6627);transform-origin:50% 0;display:inline-block;">Lock</span></div>
<div style="position:absolute;left:1160.5px;top:808.2px;width:37.5px;height:16.299999999999955px;background:linear-gradient(#e4fce4 0%,#c8f4c8 45%,#6cdc6c 50%,#5cd45c 100%);border:1px solid #a8a8a8;border-radius:1px;box-sizing:border-box"></div>
<div style="position:absolute;left:1179.25px;width:0;display:flex;justify-content:center;top:812.09px;height:10px;"><span style="white-space:pre;font:400 10px/10px 'Liberation Sans', sans-serif;color:#111;-webkit-text-stroke:0.25px #111;transform:scaleX(0.6963);transform-origin:50% 0;display:inline-block;">Input TS</span></div>
<div style="position:absolute;left:1160.5px;top:828.7px;width:37.5px;height:16.699999999999932px;background:linear-gradient(#e4fce4 0%,#c8f4c8 45%,#6cdc6c 50%,#5cd45c 100%);border:1px solid #a8a8a8;border-radius:1px;box-sizing:border-box"></div>
<div style="position:absolute;left:1179.25px;width:0;display:flex;justify-content:center;top:832.78px;height:10px;"><span style="white-space:pre;font:400 10px/10px 'Liberation Sans', sans-serif;color:#111;-webkit-text-stroke:0.25px #111;transform:scaleX(0.6195);transform-origin:50% 0;display:inline-block;">Sync TS</span></div>
<div style="position:absolute;left:45.7px;top:808.2px;width:554.3px;height:16.299999999999955px;background:#d8d8d8;border:1px solid #bababa;border-radius:1.5px;box-sizing:border-box"></div>
<div style="position:absolute;left:46.7px;top:809.2px;width:91.99999999999999px;height:14.299999999999955px;background:linear-gradient(#ffdcdc 0%,#ffcfcf 54%,#de6a6a 54%,#e87c7c 100%)"></div>
<div style="position:absolute;left:138.7px;top:809.2px;width:92.10000000000002px;height:14.299999999999955px;background:linear-gradient(#ffffe2 0%,#fefdd4 54%,#e2d866 54%,#f2ea7c 100%)"></div>
<div style="position:absolute;left:230.8px;top:809.2px;width:149.89999999999998px;height:14.299999999999955px;background:linear-gradient(#e4fde4 0%,#d4fad4 54%,#5cd25c 54%,#74e474 100%)"></div>
<div style="position:absolute;left:380.7px;top:809.2px;width:218.3px;height:14.299999999999955px;background:linear-gradient(#e8e8e8 0%,#e4e4e4 54%,#d2d2d2 54%,#dcdcdc 100%)"></div>
<div style="position:absolute;left:323.85px;width:0;display:flex;justify-content:center;top:812.09px;height:10px;"><span style="white-space:pre;font:400 10px/10px 'Liberation Sans', sans-serif;color:#111;-webkit-text-stroke:0.25px #111;transform:scaleX(0.6590);transform-origin:50% 0;display:inline-block;">SNR: 18,1 dB</span></div>
<div style="position:absolute;left:45.7px;top:828.7px;width:554.3px;height:16.699999999999932px;background:#d8d8d8;border:1px solid #bababa;border-radius:1.5px;box-sizing:border-box"></div>
<div style="position:absolute;left:46.7px;top:829.7px;width:54.599999999999994px;height:14.699999999999932px;background:linear-gradient(#ffdcdc 0%,#ffcfcf 54%,#de6a6a 54%,#e87c7c 100%)"></div>
<div style="position:absolute;left:101.3px;top:829.7px;width:221.7px;height:14.699999999999932px;background:linear-gradient(#ffffe2 0%,#fefdd4 54%,#e2d866 54%,#f2ea7c 100%)"></div>
<div style="position:absolute;left:323px;top:829.7px;width:276px;height:14.699999999999932px;background:linear-gradient(#e4fde4 0%,#d4fad4 54%,#5cd25c 54%,#74e474 100%)"></div>
<div style="position:absolute;left:323.20px;width:0;display:flex;justify-content:center;top:832.78px;height:10px;"><span style="white-space:pre;font:400 10px/10px 'Liberation Sans', sans-serif;color:#111;-webkit-text-stroke:0.25px #111;transform:scaleX(0.6922);transform-origin:50% 0;display:inline-block;">Quality: 100%</span></div>
<div style="position:absolute;left:603.75px;top:808.2px;width:274.95000000000005px;height:16.299999999999955px;background:#d8d8d8;border:1px solid #bababa;border-radius:1.5px;box-sizing:border-box"></div>
<div style="position:absolute;left:604.75px;top:809.2px;width:58.0px;height:14.299999999999955px;background:linear-gradient(#ffdcdc 0%,#ffcfcf 54%,#de6a6a 54%,#e87c7c 100%)"></div>
<div style="position:absolute;left:662.75px;top:809.2px;width:98.25px;height:14.299999999999955px;background:linear-gradient(#ffffe2 0%,#fefdd4 54%,#e2d866 54%,#f2ea7c 100%)"></div>
<div style="position:absolute;left:761px;top:809.2px;width:116.70000000000005px;height:14.299999999999955px;background:linear-gradient(#e4fde4 0%,#d4fad4 54%,#5cd25c 54%,#74e474 100%)"></div>
<div style="position:absolute;left:740.20px;width:0;display:flex;justify-content:center;top:812.09px;height:10px;"><span style="white-space:pre;font:400 10px/10px 'Liberation Sans', sans-serif;color:#111;-webkit-text-stroke:0.25px #111;transform:scaleX(0.6722);transform-origin:50% 0;display:inline-block;">preBER: &lt;1.0E-7</span></div>
<div style="position:absolute;left:882px;top:808.2px;width:275.5999999999999px;height:16.299999999999955px;background:#d8d8d8;border:1px solid #bababa;border-radius:1.5px;box-sizing:border-box"></div>
<div style="position:absolute;left:883px;top:809.2px;width:58.799999999999955px;height:14.299999999999955px;background:linear-gradient(#ffdcdc 0%,#ffcfcf 54%,#de6a6a 54%,#e87c7c 100%)"></div>
<div style="position:absolute;left:941.8px;top:809.2px;width:98.20000000000005px;height:14.299999999999955px;background:linear-gradient(#ffffe2 0%,#fefdd4 54%,#e2d866 54%,#f2ea7c 100%)"></div>
<div style="position:absolute;left:1040px;top:809.2px;width:116.59999999999991px;height:14.299999999999955px;background:linear-gradient(#e4fde4 0%,#d4fad4 54%,#5cd25c 54%,#74e474 100%)"></div>
<div style="position:absolute;left:1019.70px;width:0;display:flex;justify-content:center;top:812.09px;height:10px;"><span style="white-space:pre;font:400 10px/10px 'Liberation Sans', sans-serif;color:#111;-webkit-text-stroke:0.25px #111;transform:scaleX(0.6643);transform-origin:50% 0;display:inline-block;">BER: &lt;1.0E-7</span></div>
<div style="position:absolute;left:603.75px;top:828.7px;width:553.8499999999999px;height:16.699999999999932px;background:#d8d8d8;border:1px solid #bababa;border-radius:1.5px;box-sizing:border-box"></div>
<div style="position:absolute;left:604.75px;top:829.7px;width:54.25px;height:14.699999999999932px;background:linear-gradient(#ffdcdc 0%,#ffcfcf 54%,#de6a6a 54%,#e87c7c 100%)"></div>
<div style="position:absolute;left:659px;top:829.7px;width:221.5px;height:14.699999999999932px;background:linear-gradient(#ffffe2 0%,#fefdd4 54%,#e2d866 54%,#f2ea7c 100%)"></div>
<div style="position:absolute;left:880.5px;top:829.7px;width:221.5px;height:14.699999999999932px;background:linear-gradient(#e4fde4 0%,#d4fad4 54%,#5cd25c 54%,#74e474 100%)"></div>
<div style="position:absolute;left:1102px;top:829.7px;width:54.59999999999991px;height:14.699999999999932px;background:linear-gradient(#e8e8e8 0%,#e4e4e4 54%,#d2d2d2 54%,#dcdcdc 100%)"></div>
<div style="position:absolute;left:881.00px;width:0;display:flex;justify-content:center;top:832.78px;height:10px;"><span style="white-space:pre;font:400 10px/10px 'Liberation Sans', sans-serif;color:#111;-webkit-text-stroke:0.25px #111;transform:scaleX(0.6790);transform-origin:50% 0;display:inline-block;">Level: 90%</span></div>
<div style="position:absolute;left:0px;top:853px;width:1200px;height:1.5px;background:#d6d6d6"></div>
<div style="position:absolute;left:2.00px;top:859.09px;white-space:pre;font:400 10.5px/10.5px 'Liberation Sans', sans-serif;color:#1a1a1a;-webkit-text-stroke:0.25px #1a1a1a;transform:scaleX(0.6601);transform-origin:0 0;letter-spacing:0.3px">Locked -&gt; Uptime: 00:02:10</div>
<div style="position:absolute;left:599.30px;top:859.09px;white-space:pre;font:400 10.5px/10.5px 'Liberation Sans', sans-serif;color:#1a1a1a;-webkit-text-stroke:0.25px #1a1a1a;transform:scaleX(0.6416);transform-origin:0 0;letter-spacing:0.3px">Best signal has been seen at 2023-10-03 08.09 with 18,1 dB</div>
<div style="position:absolute;left:546px;top:0px;width:107px;height:105px;background:rgba(255,255,255,0.55)"></div>
<svg style="position:absolute;left:546px;top:0px" width="108" height="106" viewBox="546 0 108 106">
<g fill="none" stroke="#7e84c6" stroke-linecap="round">
<path d="M563.16 82.55 A47 47 0 0 1 631.40 18.58" stroke-width="2"/>
<path d="M635.15 22.25 A47 47 0 0 1 647.46 55.97" stroke-width="2.8"/>
<path d="M646.98 60.95 A47 47 0 0 1 634.99 85.93" stroke-width="2"/>
<path d="M565.5 87 H635" stroke-width="1.6"/>
<path d="M626.5 35 Q632.5 43 634 52" stroke="#e07a7a" stroke-width="2.8" stroke-linecap="butt"/>
<path d="M630 28 Q637.5 39 641 55" stroke="#e07a7a" stroke-width="2.8" stroke-linecap="butt"/>
<path d="M584.5 14.5 Q594 22 600 39" stroke-width="1.1"/>
<path d="M584.5 14.5 Q582 20 589 41 Q598 66 610.5 83.5" stroke-width="1.1"/>
<path d="M586.5 36 Q589 48 587.5 57 Q585 62 581 64" stroke-width="1.2"/>
<path d="M602 46.8 H620.5 L611.5 58" stroke-width="0.9"/>
<path d="M604 48.5 H614" stroke-width="0.7"/>
<circle cx="578.7" cy="65.8" r="3.3" stroke-width="1.3"/>
<path d="M573 69 Q579 74 577 79 Q573 85 565.5 87.3" stroke-width="1.5"/>
<path d="M585.7 63.3 Q592 64 597 72 Q602 78 607 81" stroke-width="1.2"/>
<path d="M582 74.7 Q583 81 585.7 86" stroke-width="1.2"/>
</g>
<text x="550.5" y="100.5" font-family="Liberation Serif" font-weight="700" font-size="14.5" textLength="100.5" lengthAdjust="spacingAndGlyphs" stroke-width="0.7"><tspan fill="#e28080" stroke="#e28080">DX</tspan><tspan fill="#7c80bc" stroke="#7c80bc">SATCS.COM</tspan></text>
</svg>
</body></html>
